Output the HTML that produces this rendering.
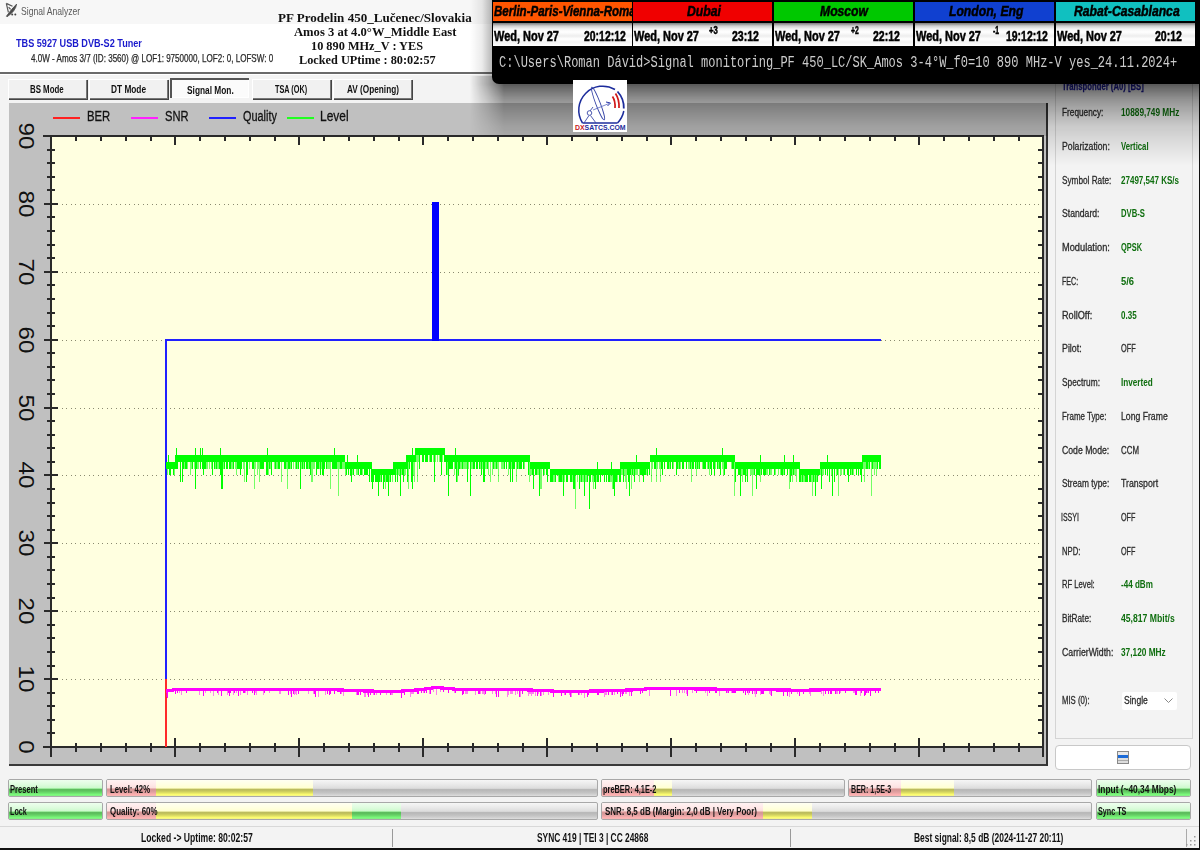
<!DOCTYPE html>
<html><head><meta charset="utf-8">
<style>
html,body{margin:0;padding:0;}
body{width:1200px;height:850px;overflow:hidden;position:relative;background:#f3f3f3;font-family:"Liberation Sans",sans-serif;}
.a{position:absolute;white-space:nowrap;}
.sx{transform-origin:0 0;}
.btn{position:absolute;top:79px;height:20px;background:#f1f1f1;box-sizing:border-box;border-top:1px solid #fff;border-left:1px solid #fff;box-shadow:inset -1px -1px 0 #777, 1px 1px 0 #444;}
.btn span{position:absolute;left:0;right:0;top:3px;text-align:center;font-size:11.5px;color:#111;}
.ylab{position:absolute;font-size:22px;color:#111;transform:translate(-50%,-50%) rotate(90deg) scaleX(1.1);line-height:1;}
.rl{position:absolute;white-space:nowrap;left:1062px;font-size:11px;color:#222;transform:scaleX(0.75);transform-origin:0 50%;}
.rv{position:absolute;white-space:nowrap;left:1121px;font-size:11px;color:#0a6a0a;font-weight:bold;transform:scaleX(0.75);transform-origin:0 50%;}
.rv.g{color:#333;font-weight:normal;}
.bar{position:absolute;height:18px;box-sizing:border-box;border:1px solid #a8a8a8;border-radius:2px;overflow:hidden;
 background:linear-gradient(#f6f6f6 0%,#e8e8e8 30%,#dcdcdc 52%,#b6b6b6 60%,#c4c4c4 80%,#d2d2d2 92%,#dedede 100%);}
.seg{position:absolute;top:0;bottom:0;}
.gr{background:linear-gradient(#eeffee 0%,#ddfcdd 30%,#ccfacc 50%,#a0eca0 53%,#58b858 60%,#66d066 75%,#7cfc7c 92%,#88e888 100%);}
.pk{background:linear-gradient(#fff2f2 0%,#ffe8e8 30%,#fbdede 50%,#ecb8b8 53%,#d49494 60%,#e0a0a0 75%,#ffb0b0 92%,#f4b8b8 100%);}
.yl{background:linear-gradient(#fffff2 0%,#ffffe0 30%,#ffffd0 50%,#e8e8a0 53%,#b8b858 60%,#d4d460 75%,#ffff70 92%,#f0f090 100%);}
.bt{position:absolute;white-space:nowrap;left:4px;top:2px;font-size:11px;color:#111;transform:scaleX(0.8);transform-origin:0 0;}
.clk{position:absolute;top:2px;height:19px;}
.clk span{position:absolute;left:-30px;right:-30px;top:1px;text-align:center;font-size:14.5px;transform:scaleX(0.82);white-space:nowrap;font-weight:bold;font-style:italic;color:#000;}
.dt{position:absolute;top:23px;height:23px;background:linear-gradient(#7a7a7a 0px,#cfcfcf 3px,#f4f4f4 6px,#ffffff 9px,#eeeeee 13px,#ffffff 16px,#f3f3f3 19px,#ffffff 23px);}
.dt .d{position:absolute;white-space:nowrap;left:1px;top:5px;font-size:14px;font-weight:bold;color:#000;transform:scaleX(0.8);transform-origin:0 0;}
.dt .t{position:absolute;white-space:nowrap;right:4px;top:5px;font-size:14px;font-weight:bold;color:#000;transform:scaleX(0.8);transform-origin:100% 0;}
.dt .s{position:absolute;top:0px;font-size:10px;font-weight:bold;color:#000;}
</style></head><body>
<!-- title bar & header -->
<div class="a" style="left:0;top:0;width:1200px;height:24px;background:#f7f7f7"></div>
<div class="a" style="left:0;top:24px;width:1200px;height:48px;background:#fff"></div>
<div class="a" style="left:0;top:72px;width:1200px;height:2px;background:#6a6a6a"></div>
<div class="a" style="left:0;top:74px;width:1200px;height:1px;background:#fff"></div>
<svg class="a" style="left:0px;top:0px" width="20" height="20" viewBox="0 0 20 20">
 <path d="M6.3 3.4 L12.5 6.3 M6.3 3.4 L8.4 12.4 M8.6 7.2 L10.6 9.4" stroke="#555" stroke-width="1.2" fill="none"/>
 <path d="M16.6 4.1 Q15.8 11 7 16.8 L6.4 16.2 Q11.5 9 16.6 4.1 Z" fill="#4a4a4a" stroke="#4a4a4a" stroke-width="0.8"/>
 <circle cx="12.2" cy="14.6" r="1" fill="#444"/><circle cx="15.3" cy="14.6" r="1" fill="#444"/>
</svg>



<!-- buttons -->
<div class="btn" style="left:8px;width:79px"></div>
<div class="btn" style="left:89px;width:79px"></div>
<div class="btn" style="left:170px;width:79px;top:78px;background:#fbfbfb;border:none;box-shadow:inset 2px 2px 0 #555, inset -1px -1px 0 #fff"></div>
<div class="btn" style="left:252px;width:79px"></div>
<div class="btn" style="left:333px;width:79px"></div>

<!-- chart panel -->
<div class="a" style="left:9px;top:103px;width:1037px;height:661px;background:#c0c0c0"></div>
<div class="a" style="left:9px;top:764px;width:1039px;height:2px;background:#3a3a3a"></div>
<div class="a" style="left:1046px;top:103px;width:2px;height:663px;background:#333"></div>
<svg width="1200" height="850" viewBox="0 0 1200 850" style="position:absolute;left:0;top:0" shape-rendering="crispEdges">
<rect x="51" y="136" width="992" height="611" fill="#ffffe0"/>
<line x1="57" y1="679.5" x2="1043" y2="679.5" stroke="#8a8a70" stroke-width="1" stroke-dasharray="1 3.5"/>
<line x1="57" y1="611.5" x2="1043" y2="611.5" stroke="#8a8a70" stroke-width="1" stroke-dasharray="1 3.5"/>
<line x1="57" y1="543.5" x2="1043" y2="543.5" stroke="#8a8a70" stroke-width="1" stroke-dasharray="1 3.5"/>
<line x1="57" y1="475.5" x2="1043" y2="475.5" stroke="#8a8a70" stroke-width="1" stroke-dasharray="1 3.5"/>
<line x1="57" y1="408.5" x2="1043" y2="408.5" stroke="#8a8a70" stroke-width="1" stroke-dasharray="1 3.5"/>
<line x1="57" y1="340.5" x2="1043" y2="340.5" stroke="#8a8a70" stroke-width="1" stroke-dasharray="1 3.5"/>
<line x1="57" y1="272.5" x2="1043" y2="272.5" stroke="#8a8a70" stroke-width="1" stroke-dasharray="1 3.5"/>
<line x1="57" y1="204.5" x2="1043" y2="204.5" stroke="#8a8a70" stroke-width="1" stroke-dasharray="1 3.5"/>
<rect x="50" y="135" width="2" height="613" fill="#2a2a2a"/>
<rect x="43" y="135" width="1000" height="2" fill="#2a2a2a"/>
<rect x="43" y="746" width="1000" height="2" fill="#2a2a2a"/>
<rect x="1042" y="135" width="2" height="613" fill="#2a2a2a"/>
<rect x="44" y="746" width="14" height="2" fill="#2a2a2a"/>
<rect x="47" y="732" width="8" height="2" fill="#2a2a2a"/>
<rect x="1038" y="732" width="5" height="2" fill="#2a2a2a"/>
<rect x="47" y="719" width="8" height="2" fill="#2a2a2a"/>
<rect x="1038" y="719" width="5" height="2" fill="#2a2a2a"/>
<rect x="47" y="705" width="8" height="2" fill="#2a2a2a"/>
<rect x="1038" y="705" width="5" height="2" fill="#2a2a2a"/>
<rect x="47" y="692" width="8" height="2" fill="#2a2a2a"/>
<rect x="1038" y="692" width="5" height="2" fill="#2a2a2a"/>
<rect x="44" y="678" width="14" height="2" fill="#2a2a2a"/>
<rect x="47" y="665" width="8" height="2" fill="#2a2a2a"/>
<rect x="1038" y="665" width="5" height="2" fill="#2a2a2a"/>
<rect x="47" y="651" width="8" height="2" fill="#2a2a2a"/>
<rect x="1038" y="651" width="5" height="2" fill="#2a2a2a"/>
<rect x="47" y="637" width="8" height="2" fill="#2a2a2a"/>
<rect x="1038" y="637" width="5" height="2" fill="#2a2a2a"/>
<rect x="47" y="624" width="8" height="2" fill="#2a2a2a"/>
<rect x="1038" y="624" width="5" height="2" fill="#2a2a2a"/>
<rect x="44" y="610" width="14" height="2" fill="#2a2a2a"/>
<rect x="47" y="597" width="8" height="2" fill="#2a2a2a"/>
<rect x="1038" y="597" width="5" height="2" fill="#2a2a2a"/>
<rect x="47" y="583" width="8" height="2" fill="#2a2a2a"/>
<rect x="1038" y="583" width="5" height="2" fill="#2a2a2a"/>
<rect x="47" y="569" width="8" height="2" fill="#2a2a2a"/>
<rect x="1038" y="569" width="5" height="2" fill="#2a2a2a"/>
<rect x="47" y="556" width="8" height="2" fill="#2a2a2a"/>
<rect x="1038" y="556" width="5" height="2" fill="#2a2a2a"/>
<rect x="44" y="542" width="14" height="2" fill="#2a2a2a"/>
<rect x="47" y="529" width="8" height="2" fill="#2a2a2a"/>
<rect x="1038" y="529" width="5" height="2" fill="#2a2a2a"/>
<rect x="47" y="515" width="8" height="2" fill="#2a2a2a"/>
<rect x="1038" y="515" width="5" height="2" fill="#2a2a2a"/>
<rect x="47" y="502" width="8" height="2" fill="#2a2a2a"/>
<rect x="1038" y="502" width="5" height="2" fill="#2a2a2a"/>
<rect x="47" y="488" width="8" height="2" fill="#2a2a2a"/>
<rect x="1038" y="488" width="5" height="2" fill="#2a2a2a"/>
<rect x="44" y="474" width="14" height="2" fill="#2a2a2a"/>
<rect x="47" y="461" width="8" height="2" fill="#2a2a2a"/>
<rect x="1038" y="461" width="5" height="2" fill="#2a2a2a"/>
<rect x="47" y="447" width="8" height="2" fill="#2a2a2a"/>
<rect x="1038" y="447" width="5" height="2" fill="#2a2a2a"/>
<rect x="47" y="434" width="8" height="2" fill="#2a2a2a"/>
<rect x="1038" y="434" width="5" height="2" fill="#2a2a2a"/>
<rect x="47" y="420" width="8" height="2" fill="#2a2a2a"/>
<rect x="1038" y="420" width="5" height="2" fill="#2a2a2a"/>
<rect x="44" y="407" width="14" height="2" fill="#2a2a2a"/>
<rect x="47" y="393" width="8" height="2" fill="#2a2a2a"/>
<rect x="1038" y="393" width="5" height="2" fill="#2a2a2a"/>
<rect x="47" y="379" width="8" height="2" fill="#2a2a2a"/>
<rect x="1038" y="379" width="5" height="2" fill="#2a2a2a"/>
<rect x="47" y="366" width="8" height="2" fill="#2a2a2a"/>
<rect x="1038" y="366" width="5" height="2" fill="#2a2a2a"/>
<rect x="47" y="352" width="8" height="2" fill="#2a2a2a"/>
<rect x="1038" y="352" width="5" height="2" fill="#2a2a2a"/>
<rect x="44" y="339" width="14" height="2" fill="#2a2a2a"/>
<rect x="47" y="325" width="8" height="2" fill="#2a2a2a"/>
<rect x="1038" y="325" width="5" height="2" fill="#2a2a2a"/>
<rect x="47" y="312" width="8" height="2" fill="#2a2a2a"/>
<rect x="1038" y="312" width="5" height="2" fill="#2a2a2a"/>
<rect x="47" y="298" width="8" height="2" fill="#2a2a2a"/>
<rect x="1038" y="298" width="5" height="2" fill="#2a2a2a"/>
<rect x="47" y="284" width="8" height="2" fill="#2a2a2a"/>
<rect x="1038" y="284" width="5" height="2" fill="#2a2a2a"/>
<rect x="44" y="271" width="14" height="2" fill="#2a2a2a"/>
<rect x="47" y="257" width="8" height="2" fill="#2a2a2a"/>
<rect x="1038" y="257" width="5" height="2" fill="#2a2a2a"/>
<rect x="47" y="244" width="8" height="2" fill="#2a2a2a"/>
<rect x="1038" y="244" width="5" height="2" fill="#2a2a2a"/>
<rect x="47" y="230" width="8" height="2" fill="#2a2a2a"/>
<rect x="1038" y="230" width="5" height="2" fill="#2a2a2a"/>
<rect x="47" y="216" width="8" height="2" fill="#2a2a2a"/>
<rect x="1038" y="216" width="5" height="2" fill="#2a2a2a"/>
<rect x="44" y="203" width="14" height="2" fill="#2a2a2a"/>
<rect x="47" y="189" width="8" height="2" fill="#2a2a2a"/>
<rect x="1038" y="189" width="5" height="2" fill="#2a2a2a"/>
<rect x="47" y="176" width="8" height="2" fill="#2a2a2a"/>
<rect x="1038" y="176" width="5" height="2" fill="#2a2a2a"/>
<rect x="47" y="162" width="8" height="2" fill="#2a2a2a"/>
<rect x="1038" y="162" width="5" height="2" fill="#2a2a2a"/>
<rect x="47" y="149" width="8" height="2" fill="#2a2a2a"/>
<rect x="1038" y="149" width="5" height="2" fill="#2a2a2a"/>
<rect x="44" y="135" width="14" height="2" fill="#2a2a2a"/>
<rect x="75" y="136" width="2" height="5" fill="#2a2a2a"/>
<rect x="75" y="743" width="2" height="9" fill="#2a2a2a"/>
<rect x="100" y="136" width="2" height="5" fill="#2a2a2a"/>
<rect x="100" y="743" width="2" height="9" fill="#2a2a2a"/>
<rect x="125" y="136" width="2" height="5" fill="#2a2a2a"/>
<rect x="125" y="743" width="2" height="9" fill="#2a2a2a"/>
<rect x="150" y="136" width="2" height="5" fill="#2a2a2a"/>
<rect x="150" y="743" width="2" height="9" fill="#2a2a2a"/>
<rect x="174" y="136" width="2" height="9" fill="#2a2a2a"/>
<rect x="174" y="738" width="2" height="19" fill="#2a2a2a"/>
<rect x="199" y="136" width="2" height="5" fill="#2a2a2a"/>
<rect x="199" y="743" width="2" height="9" fill="#2a2a2a"/>
<rect x="224" y="136" width="2" height="5" fill="#2a2a2a"/>
<rect x="224" y="743" width="2" height="9" fill="#2a2a2a"/>
<rect x="249" y="136" width="2" height="5" fill="#2a2a2a"/>
<rect x="249" y="743" width="2" height="9" fill="#2a2a2a"/>
<rect x="274" y="136" width="2" height="5" fill="#2a2a2a"/>
<rect x="274" y="743" width="2" height="9" fill="#2a2a2a"/>
<rect x="298" y="136" width="2" height="9" fill="#2a2a2a"/>
<rect x="298" y="738" width="2" height="19" fill="#2a2a2a"/>
<rect x="323" y="136" width="2" height="5" fill="#2a2a2a"/>
<rect x="323" y="743" width="2" height="9" fill="#2a2a2a"/>
<rect x="348" y="136" width="2" height="5" fill="#2a2a2a"/>
<rect x="348" y="743" width="2" height="9" fill="#2a2a2a"/>
<rect x="373" y="136" width="2" height="5" fill="#2a2a2a"/>
<rect x="373" y="743" width="2" height="9" fill="#2a2a2a"/>
<rect x="398" y="136" width="2" height="5" fill="#2a2a2a"/>
<rect x="398" y="743" width="2" height="9" fill="#2a2a2a"/>
<rect x="422" y="136" width="2" height="9" fill="#2a2a2a"/>
<rect x="422" y="738" width="2" height="19" fill="#2a2a2a"/>
<rect x="447" y="136" width="2" height="5" fill="#2a2a2a"/>
<rect x="447" y="743" width="2" height="9" fill="#2a2a2a"/>
<rect x="472" y="136" width="2" height="5" fill="#2a2a2a"/>
<rect x="472" y="743" width="2" height="9" fill="#2a2a2a"/>
<rect x="497" y="136" width="2" height="5" fill="#2a2a2a"/>
<rect x="497" y="743" width="2" height="9" fill="#2a2a2a"/>
<rect x="522" y="136" width="2" height="5" fill="#2a2a2a"/>
<rect x="522" y="743" width="2" height="9" fill="#2a2a2a"/>
<rect x="546" y="136" width="2" height="9" fill="#2a2a2a"/>
<rect x="546" y="738" width="2" height="19" fill="#2a2a2a"/>
<rect x="571" y="136" width="2" height="5" fill="#2a2a2a"/>
<rect x="571" y="743" width="2" height="9" fill="#2a2a2a"/>
<rect x="596" y="136" width="2" height="5" fill="#2a2a2a"/>
<rect x="596" y="743" width="2" height="9" fill="#2a2a2a"/>
<rect x="621" y="136" width="2" height="5" fill="#2a2a2a"/>
<rect x="621" y="743" width="2" height="9" fill="#2a2a2a"/>
<rect x="646" y="136" width="2" height="5" fill="#2a2a2a"/>
<rect x="646" y="743" width="2" height="9" fill="#2a2a2a"/>
<rect x="670" y="136" width="2" height="9" fill="#2a2a2a"/>
<rect x="670" y="738" width="2" height="19" fill="#2a2a2a"/>
<rect x="695" y="136" width="2" height="5" fill="#2a2a2a"/>
<rect x="695" y="743" width="2" height="9" fill="#2a2a2a"/>
<rect x="720" y="136" width="2" height="5" fill="#2a2a2a"/>
<rect x="720" y="743" width="2" height="9" fill="#2a2a2a"/>
<rect x="745" y="136" width="2" height="5" fill="#2a2a2a"/>
<rect x="745" y="743" width="2" height="9" fill="#2a2a2a"/>
<rect x="770" y="136" width="2" height="5" fill="#2a2a2a"/>
<rect x="770" y="743" width="2" height="9" fill="#2a2a2a"/>
<rect x="794" y="136" width="2" height="9" fill="#2a2a2a"/>
<rect x="794" y="738" width="2" height="19" fill="#2a2a2a"/>
<rect x="819" y="136" width="2" height="5" fill="#2a2a2a"/>
<rect x="819" y="743" width="2" height="9" fill="#2a2a2a"/>
<rect x="844" y="136" width="2" height="5" fill="#2a2a2a"/>
<rect x="844" y="743" width="2" height="9" fill="#2a2a2a"/>
<rect x="869" y="136" width="2" height="5" fill="#2a2a2a"/>
<rect x="869" y="743" width="2" height="9" fill="#2a2a2a"/>
<rect x="894" y="136" width="2" height="5" fill="#2a2a2a"/>
<rect x="894" y="743" width="2" height="9" fill="#2a2a2a"/>
<rect x="918" y="136" width="2" height="9" fill="#2a2a2a"/>
<rect x="918" y="738" width="2" height="19" fill="#2a2a2a"/>
<rect x="943" y="136" width="2" height="5" fill="#2a2a2a"/>
<rect x="943" y="743" width="2" height="9" fill="#2a2a2a"/>
<rect x="968" y="136" width="2" height="5" fill="#2a2a2a"/>
<rect x="968" y="743" width="2" height="9" fill="#2a2a2a"/>
<rect x="993" y="136" width="2" height="5" fill="#2a2a2a"/>
<rect x="993" y="743" width="2" height="9" fill="#2a2a2a"/>
<rect x="1018" y="136" width="2" height="5" fill="#2a2a2a"/>
<rect x="1018" y="743" width="2" height="9" fill="#2a2a2a"/>
<rect x="50" y="747" width="2" height="10" fill="#2a2a2a"/>
<rect x="1042" y="747" width="2" height="10" fill="#2a2a2a"/>
<rect x="165" y="679.1111111111111" width="2" height="67.88888888888891" fill="#ff2a2a"/>
<rect x="165" y="339" width="2" height="340.1111111111111" fill="#2020ff"/>
<rect x="165" y="339" width="716" height="2" fill="#2020ff"/>
<rect x="432" y="202" width="7" height="139" fill="#0000ff"/>
<path d="M166.5,461.9V468.7M167.5,461.9V468.7M168.5,455.1V468.7M169.5,461.9V468.7M170.5,461.9V468.7M171.5,461.9V468.7M172.5,461.9V468.7M173.5,461.9V468.7M174.5,461.9V468.7M175.5,455.1V461.9M176.5,448.3V461.9M177.5,455.1V461.9M178.5,455.1V461.9M179.5,455.1V461.9M180.5,455.1V461.9M181.5,455.1V461.9M182.5,455.1V461.9M183.5,455.1V461.9M184.5,455.1V461.9M185.5,455.1V461.9M186.5,455.1V461.9M187.5,455.1V461.9M188.5,455.1V461.9M189.5,455.1V461.9M190.5,455.1V461.9M191.5,455.1V461.9M192.5,455.1V461.9M193.5,455.1V461.9M194.5,455.1V461.9M195.5,448.3V461.9M196.5,455.1V461.9M197.5,455.1V461.9M198.5,455.1V461.9M199.5,455.1V461.9M200.5,448.3V461.9M201.5,455.1V461.9M202.5,448.3V461.9M203.5,455.1V461.9M204.5,455.1V461.9M205.5,455.1V461.9M206.5,455.1V461.9M207.5,455.1V461.9M208.5,455.1V461.9M209.5,455.1V461.9M210.5,455.1V461.9M211.5,455.1V461.9M212.5,455.1V461.9M213.5,455.1V461.9M214.5,455.1V461.9M215.5,455.1V461.9M216.5,455.1V461.9M217.5,455.1V461.9M218.5,455.1V461.9M219.5,455.1V461.9M220.5,448.3V461.9M221.5,455.1V461.9M222.5,455.1V461.9M223.5,455.1V461.9M224.5,455.1V461.9M225.5,455.1V461.9M226.5,455.1V461.9M227.5,455.1V461.9M228.5,455.1V461.9M229.5,455.1V461.9M230.5,455.1V461.9M231.5,455.1V461.9M232.5,455.1V461.9M233.5,455.1V461.9M234.5,455.1V461.9M235.5,455.1V461.9M236.5,455.1V461.9M237.5,455.1V461.9M238.5,455.1V461.9M239.5,455.1V461.9M240.5,455.1V461.9M241.5,455.1V461.9M242.5,455.1V461.9M243.5,455.1V461.9M244.5,455.1V461.9M245.5,455.1V461.9M246.5,455.1V461.9M247.5,455.1V461.9M248.5,455.1V461.9M249.5,455.1V461.9M250.5,455.1V461.9M251.5,455.1V461.9M252.5,455.1V461.9M253.5,455.1V461.9M254.5,455.1V461.9M255.5,455.1V461.9M256.5,455.1V461.9M257.5,455.1V461.9M258.5,455.1V461.9M259.5,455.1V461.9M260.5,455.1V461.9M261.5,455.1V461.9M262.5,455.1V461.9M263.5,455.1V461.9M264.5,455.1V461.9M265.5,455.1V461.9M266.5,455.1V461.9M267.5,448.3V461.9M268.5,455.1V461.9M269.5,455.1V461.9M270.5,455.1V461.9M271.5,455.1V461.9M272.5,455.1V461.9M273.5,455.1V461.9M274.5,455.1V461.9M275.5,455.1V461.9M276.5,455.1V461.9M277.5,455.1V461.9M278.5,455.1V461.9M279.5,455.1V461.9M280.5,455.1V461.9M281.5,455.1V461.9M282.5,455.1V461.9M283.5,455.1V461.9M284.5,455.1V461.9M285.5,455.1V461.9M286.5,455.1V461.9M287.5,455.1V461.9M288.5,455.1V461.9M289.5,455.1V461.9M290.5,455.1V461.9M291.5,455.1V461.9M292.5,455.1V461.9M293.5,455.1V461.9M294.5,455.1V461.9M295.5,455.1V461.9M296.5,455.1V461.9M297.5,455.1V461.9M298.5,455.1V461.9M299.5,455.1V461.9M300.5,455.1V461.9M301.5,455.1V461.9M302.5,455.1V461.9M303.5,455.1V461.9M304.5,455.1V461.9M305.5,455.1V461.9M306.5,455.1V461.9M307.5,455.1V461.9M308.5,455.1V461.9M309.5,455.1V461.9M310.5,455.1V461.9M311.5,455.1V461.9M312.5,455.1V461.9M313.5,455.1V461.9M314.5,455.1V461.9M315.5,455.1V461.9M316.5,455.1V461.9M317.5,455.1V461.9M318.5,455.1V461.9M319.5,455.1V461.9M320.5,455.1V461.9M321.5,455.1V461.9M322.5,455.1V461.9M323.5,455.1V461.9M324.5,455.1V461.9M325.5,455.1V461.9M326.5,455.1V461.9M327.5,455.1V461.9M328.5,455.1V461.9M329.5,455.1V461.9M330.5,455.1V461.9M331.5,455.1V461.9M332.5,455.1V461.9M333.5,455.1V461.9M334.5,448.3V461.9M335.5,455.1V461.9M336.5,455.1V461.9M337.5,455.1V461.9M338.5,455.1V461.9M339.5,455.1V461.9M340.5,455.1V461.9M341.5,455.1V461.9M342.5,455.1V461.9M343.5,455.1V461.9M344.5,455.1V461.9M345.5,461.9V468.7M346.5,461.9V468.7M347.5,455.1V468.7M348.5,461.9V468.7M349.5,461.9V468.7M350.5,461.9V468.7M351.5,461.9V468.7M352.5,461.9V468.7M353.5,461.9V468.7M354.5,461.9V468.7M355.5,461.9V468.7M356.5,461.9V468.7M357.5,455.1V468.7M358.5,461.9V468.7M359.5,461.9V468.7M360.5,461.9V468.7M361.5,461.9V468.7M362.5,461.9V468.7M363.5,461.9V468.7M364.5,461.9V468.7M365.5,461.9V468.7M366.5,461.9V468.7M367.5,461.9V468.7M368.5,461.9V468.7M369.5,461.9V468.7M370.5,461.9V468.7M371.5,461.9V468.7M372.5,468.7V475.4M373.5,468.7V475.4M374.5,468.7V475.4M375.5,468.7V475.4M376.5,468.7V475.4M377.5,468.7V475.4M378.5,468.7V475.4M379.5,468.7V475.4M380.5,468.7V475.4M381.5,468.7V475.4M382.5,468.7V475.4M383.5,468.7V475.4M384.5,468.7V475.4M385.5,468.7V475.4M386.5,468.7V475.4M387.5,468.7V475.4M388.5,468.7V475.4M389.5,468.7V475.4M390.5,468.7V475.4M391.5,468.7V475.4M392.5,468.7V475.4M393.5,461.9V468.7M394.5,461.9V468.7M395.5,461.9V468.7M396.5,461.9V468.7M397.5,461.9V468.7M398.5,461.9V468.7M399.5,461.9V468.7M400.5,461.9V468.7M401.5,461.9V468.7M402.5,461.9V468.7M403.5,461.9V468.7M404.5,461.9V468.7M405.5,461.9V468.7M406.5,455.1V461.9M407.5,455.1V461.9M408.5,455.1V461.9M409.5,455.1V461.9M410.5,455.1V461.9M411.5,455.1V461.9M412.5,448.3V461.9M413.5,455.1V461.9M414.5,455.1V461.9M415.5,448.3V455.1M416.5,448.3V455.1M417.5,448.3V455.1M418.5,448.3V455.1M419.5,448.3V455.1M420.5,448.3V455.1M421.5,448.3V455.1M422.5,448.3V455.1M423.5,448.3V455.1M424.5,448.3V455.1M425.5,448.3V455.1M426.5,448.3V455.1M427.5,448.3V455.1M428.5,448.3V455.1M429.5,448.3V455.1M430.5,448.3V455.1M431.5,448.3V455.1M432.5,448.3V455.1M433.5,448.3V455.1M434.5,448.3V455.1M435.5,448.3V455.1M436.5,448.3V455.1M437.5,448.3V455.1M438.5,448.3V455.1M439.5,448.3V455.1M440.5,448.3V455.1M441.5,448.3V455.1M442.5,448.3V455.1M443.5,448.3V455.1M444.5,448.3V455.1M445.5,455.1V461.9M446.5,455.1V461.9M447.5,455.1V461.9M448.5,455.1V461.9M449.5,455.1V461.9M450.5,455.1V461.9M451.5,455.1V461.9M452.5,455.1V461.9M453.5,455.1V461.9M454.5,455.1V461.9M455.5,448.3V461.9M456.5,455.1V461.9M457.5,455.1V461.9M458.5,455.1V461.9M459.5,455.1V461.9M460.5,455.1V461.9M461.5,455.1V461.9M462.5,455.1V461.9M463.5,455.1V461.9M464.5,455.1V461.9M465.5,455.1V461.9M466.5,455.1V461.9M467.5,455.1V461.9M468.5,455.1V461.9M469.5,455.1V461.9M470.5,455.1V461.9M471.5,455.1V461.9M472.5,455.1V461.9M473.5,455.1V461.9M474.5,455.1V461.9M475.5,455.1V461.9M476.5,455.1V461.9M477.5,455.1V461.9M478.5,455.1V461.9M479.5,455.1V461.9M480.5,455.1V461.9M481.5,455.1V461.9M482.5,455.1V461.9M483.5,455.1V461.9M484.5,455.1V461.9M485.5,455.1V461.9M486.5,455.1V461.9M487.5,455.1V461.9M488.5,455.1V461.9M489.5,455.1V461.9M490.5,455.1V461.9M491.5,455.1V461.9M492.5,455.1V461.9M493.5,455.1V461.9M494.5,455.1V461.9M495.5,455.1V461.9M496.5,455.1V461.9M497.5,455.1V461.9M498.5,455.1V461.9M499.5,455.1V461.9M500.5,455.1V461.9M501.5,455.1V461.9M502.5,455.1V461.9M503.5,455.1V461.9M504.5,455.1V461.9M505.5,455.1V461.9M506.5,455.1V461.9M507.5,455.1V461.9M508.5,455.1V461.9M509.5,455.1V461.9M510.5,455.1V461.9M511.5,455.1V461.9M512.5,455.1V461.9M513.5,455.1V461.9M514.5,455.1V461.9M515.5,455.1V461.9M516.5,455.1V461.9M517.5,455.1V461.9M518.5,455.1V461.9M519.5,455.1V461.9M520.5,455.1V461.9M521.5,455.1V461.9M522.5,455.1V461.9M523.5,455.1V461.9M524.5,455.1V461.9M525.5,455.1V461.9M526.5,455.1V461.9M527.5,455.1V461.9M528.5,455.1V461.9M529.5,455.1V461.9M530.5,461.9V468.7M531.5,461.9V468.7M532.5,461.9V468.7M533.5,461.9V468.7M534.5,461.9V468.7M535.5,461.9V468.7M536.5,461.9V468.7M537.5,461.9V468.7M538.5,461.9V468.7M539.5,461.9V468.7M540.5,461.9V468.7M541.5,461.9V468.7M542.5,461.9V468.7M543.5,461.9V468.7M544.5,461.9V468.7M545.5,461.9V468.7M546.5,461.9V468.7M547.5,461.9V468.7M548.5,461.9V468.7M549.5,461.9V468.7M550.5,468.7V475.4M551.5,468.7V475.4M552.5,468.7V475.4M553.5,468.7V475.4M554.5,468.7V475.4M555.5,468.7V475.4M556.5,468.7V475.4M557.5,468.7V475.4M558.5,468.7V475.4M559.5,468.7V475.4M560.5,468.7V475.4M561.5,468.7V475.4M562.5,468.7V475.4M563.5,468.7V475.4M564.5,468.7V475.4M565.5,468.7V475.4M566.5,468.7V475.4M567.5,468.7V475.4M568.5,468.7V475.4M569.5,468.7V475.4M570.5,468.7V475.4M571.5,468.7V475.4M572.5,468.7V475.4M573.5,468.7V475.4M574.5,468.7V475.4M575.5,468.7V475.4M576.5,468.7V475.4M577.5,468.7V475.4M578.5,468.7V475.4M579.5,468.7V475.4M580.5,468.7V475.4M581.5,468.7V475.4M582.5,468.7V475.4M583.5,468.7V475.4M584.5,468.7V475.4M585.5,468.7V475.4M586.5,468.7V475.4M587.5,468.7V475.4M588.5,468.7V475.4M589.5,468.7V475.4M590.5,468.7V475.4M591.5,468.7V475.4M592.5,468.7V475.4M593.5,468.7V475.4M594.5,468.7V475.4M595.5,468.7V475.4M596.5,468.7V475.4M597.5,461.9V475.4M598.5,468.7V475.4M599.5,468.7V475.4M600.5,468.7V475.4M601.5,468.7V475.4M602.5,468.7V475.4M603.5,468.7V475.4M604.5,468.7V475.4M605.5,468.7V475.4M606.5,468.7V475.4M607.5,468.7V475.4M608.5,468.7V475.4M609.5,468.7V475.4M610.5,468.7V475.4M611.5,461.9V475.4M612.5,468.7V475.4M613.5,468.7V475.4M614.5,468.7V475.4M615.5,468.7V475.4M616.5,468.7V475.4M617.5,468.7V475.4M618.5,468.7V475.4M619.5,468.7V475.4M620.5,461.9V468.7M621.5,461.9V468.7M622.5,461.9V468.7M623.5,461.9V468.7M624.5,461.9V468.7M625.5,461.9V468.7M626.5,461.9V468.7M627.5,461.9V468.7M628.5,461.9V468.7M629.5,461.9V468.7M630.5,461.9V468.7M631.5,461.9V468.7M632.5,461.9V468.7M633.5,461.9V468.7M634.5,461.9V468.7M635.5,461.9V468.7M636.5,455.1V468.7M637.5,461.9V468.7M638.5,461.9V468.7M639.5,461.9V468.7M640.5,461.9V468.7M641.5,461.9V468.7M642.5,461.9V468.7M643.5,461.9V468.7M644.5,461.9V468.7M645.5,461.9V468.7M646.5,461.9V468.7M647.5,461.9V468.7M648.5,461.9V468.7M649.5,461.9V468.7M650.5,455.1V461.9M651.5,455.1V461.9M652.5,455.1V461.9M653.5,455.1V461.9M654.5,455.1V461.9M655.5,455.1V461.9M656.5,448.3V461.9M657.5,455.1V461.9M658.5,455.1V461.9M659.5,455.1V461.9M660.5,455.1V461.9M661.5,455.1V461.9M662.5,455.1V461.9M663.5,455.1V461.9M664.5,455.1V461.9M665.5,455.1V461.9M666.5,455.1V461.9M667.5,455.1V461.9M668.5,455.1V461.9M669.5,455.1V461.9M670.5,455.1V461.9M671.5,455.1V461.9M672.5,455.1V461.9M673.5,455.1V461.9M674.5,455.1V461.9M675.5,455.1V461.9M676.5,455.1V461.9M677.5,455.1V461.9M678.5,455.1V461.9M679.5,455.1V461.9M680.5,455.1V461.9M681.5,455.1V461.9M682.5,455.1V461.9M683.5,455.1V461.9M684.5,455.1V461.9M685.5,455.1V461.9M686.5,455.1V461.9M687.5,455.1V461.9M688.5,455.1V461.9M689.5,455.1V461.9M690.5,455.1V461.9M691.5,455.1V461.9M692.5,455.1V461.9M693.5,455.1V461.9M694.5,455.1V461.9M695.5,455.1V461.9M696.5,455.1V461.9M697.5,455.1V461.9M698.5,455.1V461.9M699.5,455.1V461.9M700.5,455.1V461.9M701.5,455.1V461.9M702.5,455.1V461.9M703.5,455.1V461.9M704.5,455.1V461.9M705.5,455.1V461.9M706.5,455.1V461.9M707.5,455.1V461.9M708.5,455.1V461.9M709.5,455.1V461.9M710.5,455.1V461.9M711.5,455.1V461.9M712.5,455.1V461.9M713.5,455.1V461.9M714.5,455.1V461.9M715.5,455.1V461.9M716.5,455.1V461.9M717.5,455.1V461.9M718.5,455.1V461.9M719.5,455.1V461.9M720.5,455.1V461.9M721.5,455.1V461.9M722.5,448.3V461.9M723.5,455.1V461.9M724.5,455.1V461.9M725.5,455.1V461.9M726.5,455.1V461.9M727.5,455.1V461.9M728.5,455.1V461.9M729.5,455.1V461.9M730.5,455.1V461.9M731.5,455.1V461.9M732.5,455.1V461.9M733.5,455.1V461.9M734.5,455.1V461.9M735.5,461.9V468.7M736.5,461.9V468.7M737.5,461.9V468.7M738.5,461.9V468.7M739.5,461.9V468.7M740.5,461.9V468.7M741.5,461.9V468.7M742.5,461.9V468.7M743.5,461.9V468.7M744.5,461.9V468.7M745.5,461.9V468.7M746.5,461.9V468.7M747.5,461.9V468.7M748.5,461.9V468.7M749.5,461.9V468.7M750.5,461.9V468.7M751.5,461.9V468.7M752.5,461.9V468.7M753.5,461.9V468.7M754.5,461.9V468.7M755.5,461.9V468.7M756.5,461.9V468.7M757.5,461.9V468.7M758.5,461.9V468.7M759.5,461.9V468.7M760.5,455.1V468.7M761.5,461.9V468.7M762.5,461.9V468.7M763.5,461.9V468.7M764.5,461.9V468.7M765.5,461.9V468.7M766.5,461.9V468.7M767.5,461.9V468.7M768.5,461.9V468.7M769.5,461.9V468.7M770.5,461.9V468.7M771.5,461.9V468.7M772.5,461.9V468.7M773.5,461.9V468.7M774.5,461.9V468.7M775.5,461.9V468.7M776.5,461.9V468.7M777.5,461.9V468.7M778.5,461.9V468.7M779.5,461.9V468.7M780.5,461.9V468.7M781.5,461.9V468.7M782.5,461.9V468.7M783.5,461.9V468.7M784.5,455.1V468.7M785.5,461.9V468.7M786.5,461.9V468.7M787.5,461.9V468.7M788.5,461.9V468.7M789.5,461.9V468.7M790.5,461.9V468.7M791.5,461.9V468.7M792.5,461.9V468.7M793.5,455.1V468.7M794.5,461.9V468.7M795.5,461.9V468.7M796.5,461.9V468.7M797.5,461.9V468.7M798.5,461.9V468.7M799.5,461.9V468.7M800.5,468.7V475.4M801.5,468.7V475.4M802.5,468.7V475.4M803.5,468.7V475.4M804.5,468.7V475.4M805.5,468.7V475.4M806.5,468.7V475.4M807.5,468.7V475.4M808.5,468.7V475.4M809.5,468.7V475.4M810.5,468.7V475.4M811.5,468.7V475.4M812.5,468.7V475.4M813.5,468.7V475.4M814.5,468.7V475.4M815.5,468.7V475.4M816.5,468.7V475.4M817.5,468.7V475.4M818.5,468.7V475.4M819.5,468.7V475.4M820.5,461.9V468.7M821.5,461.9V468.7M822.5,461.9V468.7M823.5,461.9V468.7M824.5,461.9V468.7M825.5,461.9V468.7M826.5,461.9V468.7M827.5,455.1V468.7M828.5,461.9V468.7M829.5,461.9V468.7M830.5,461.9V468.7M831.5,461.9V468.7M832.5,461.9V468.7M833.5,461.9V468.7M834.5,461.9V468.7M835.5,461.9V468.7M836.5,461.9V468.7M837.5,461.9V468.7M838.5,461.9V468.7M839.5,461.9V468.7M840.5,461.9V468.7M841.5,461.9V468.7M842.5,461.9V468.7M843.5,461.9V468.7M844.5,461.9V468.7M845.5,461.9V468.7M846.5,461.9V468.7M847.5,461.9V468.7M848.5,461.9V468.7M849.5,461.9V468.7M850.5,461.9V468.7M851.5,461.9V468.7M852.5,461.9V468.7M853.5,461.9V468.7M854.5,461.9V468.7M855.5,461.9V468.7M856.5,461.9V468.7M857.5,461.9V468.7M858.5,461.9V468.7M859.5,461.9V468.7M860.5,461.9V468.7M861.5,461.9V468.7M862.5,455.1V461.9M863.5,455.1V461.9M864.5,455.1V461.9M865.5,455.1V461.9M866.5,455.1V461.9M867.5,455.1V461.9M868.5,455.1V461.9M869.5,455.1V461.9M870.5,455.1V461.9M871.5,455.1V461.9M872.5,455.1V461.9M873.5,455.1V461.9M874.5,455.1V461.9M875.5,455.1V461.9M876.5,455.1V461.9M877.5,455.1V461.9M878.5,455.1V461.9M879.5,455.1V461.9M880.5,455.1V461.9" stroke="#00ff00" stroke-width="1" fill="none"/>
<path d="M169.5,468.7V475.4M170.5,468.7V475.4M173.5,468.7V475.4M175.5,461.9V468.7M176.5,461.9V468.7M177.5,461.9V468.7M180.5,461.9V482.2M182.5,461.9V482.2M183.5,461.9V468.7M185.5,461.9V468.7M186.5,461.9V468.7M192.5,461.9V468.7M195.5,461.9V489.0M196.5,461.9V468.7M200.5,461.9V468.7M202.5,461.9V468.7M203.5,461.9V475.4M204.5,461.9V468.7M205.5,461.9V468.7M212.5,461.9V475.4M214.5,461.9V468.7M216.5,461.9V468.7M219.5,461.9V468.7M220.5,461.9V475.4M221.5,461.9V489.0M222.5,461.9V489.0M224.5,461.9V468.7M226.5,461.9V468.7M227.5,461.9V468.7M229.5,461.9V468.7M230.5,461.9V468.7M233.5,461.9V468.7M237.5,461.9V468.7M238.5,461.9V468.7M239.5,461.9V468.7M240.5,461.9V475.4M241.5,461.9V468.7M246.5,461.9V482.2M247.5,461.9V475.4M252.5,461.9V468.7M253.5,461.9V468.7M260.5,461.9V468.7M261.5,461.9V468.7M262.5,461.9V468.7M263.5,461.9V468.7M266.5,461.9V475.4M267.5,461.9V475.4M269.5,461.9V468.7M271.5,461.9V475.4M275.5,461.9V468.7M278.5,461.9V468.7M279.5,461.9V468.7M284.5,461.9V468.7M285.5,461.9V468.7M288.5,461.9V468.7M289.5,461.9V468.7M291.5,461.9V468.7M296.5,461.9V468.7M298.5,461.9V468.7M300.5,461.9V489.0M302.5,461.9V468.7M304.5,461.9V468.7M306.5,461.9V468.7M307.5,461.9V468.7M309.5,461.9V468.7M310.5,461.9V475.4M316.5,461.9V475.4M317.5,461.9V468.7M318.5,461.9V468.7M320.5,461.9V475.4M322.5,461.9V475.4M323.5,461.9V475.4M324.5,461.9V468.7M326.5,461.9V468.7M332.5,461.9V468.7M333.5,461.9V468.7M334.5,461.9V468.7M335.5,461.9V468.7M336.5,461.9V468.7M340.5,461.9V468.7M341.5,461.9V468.7M346.5,468.7V475.4M348.5,468.7V475.4M350.5,468.7V475.4M351.5,468.7V482.2M353.5,468.7V475.4M358.5,468.7V475.4M360.5,468.7V475.4M361.5,468.7V475.4M364.5,468.7V475.4M365.5,468.7V475.4M366.5,468.7V475.4M367.5,468.7V475.4M369.5,468.7V482.2M371.5,468.7V482.2M372.5,475.4V489.0M373.5,475.4V482.2M375.5,475.4V482.2M376.5,475.4V482.2M377.5,475.4V482.2M378.5,475.4V495.8M379.5,475.4V482.2M381.5,475.4V482.2M383.5,475.4V489.0M384.5,475.4V482.2M386.5,475.4V482.2M387.5,475.4V482.2M388.5,475.4V495.8M390.5,475.4V482.2M393.5,468.7V475.4M394.5,468.7V475.4M395.5,468.7V482.2M397.5,468.7V482.2M400.5,468.7V495.8M402.5,468.7V475.4M403.5,468.7V482.2M406.5,461.9V468.7M407.5,461.9V482.2M409.5,461.9V468.7M411.5,461.9V482.2M412.5,461.9V489.0M415.5,455.1V461.9M419.5,455.1V468.7M422.5,455.1V461.9M423.5,455.1V461.9M425.5,455.1V461.9M426.5,455.1V461.9M427.5,455.1V461.9M430.5,455.1V461.9M431.5,455.1V461.9M434.5,455.1V482.2M440.5,455.1V461.9M441.5,455.1V475.4M444.5,455.1V461.9M446.5,461.9V475.4M448.5,461.9V495.8M449.5,461.9V468.7M450.5,461.9V468.7M451.5,461.9V468.7M452.5,461.9V468.7M455.5,461.9V468.7M456.5,461.9V482.2M458.5,461.9V475.4M459.5,461.9V468.7M462.5,461.9V468.7M467.5,461.9V482.2M470.5,461.9V495.8M473.5,461.9V468.7M474.5,461.9V468.7M476.5,461.9V468.7M477.5,461.9V468.7M479.5,461.9V468.7M481.5,461.9V475.4M483.5,461.9V482.2M484.5,461.9V482.2M487.5,461.9V468.7M493.5,461.9V468.7M496.5,461.9V468.7M504.5,461.9V468.7M506.5,461.9V468.7M509.5,461.9V468.7M510.5,461.9V482.2M512.5,461.9V482.2M513.5,461.9V468.7M514.5,461.9V468.7M517.5,461.9V468.7M519.5,461.9V468.7M520.5,461.9V468.7M521.5,461.9V468.7M523.5,461.9V468.7M528.5,461.9V475.4M532.5,468.7V475.4M533.5,468.7V489.0M535.5,468.7V475.4M536.5,468.7V475.4M539.5,468.7V495.8M543.5,468.7V475.4M546.5,468.7V475.4M547.5,468.7V482.2M550.5,475.4V482.2M551.5,475.4V482.2M552.5,475.4V482.2M555.5,475.4V482.2M559.5,475.4V482.2M560.5,475.4V482.2M561.5,475.4V482.2M563.5,475.4V495.8M566.5,475.4V482.2M567.5,475.4V482.2M570.5,475.4V482.2M571.5,475.4V482.2M573.5,475.4V489.0M574.5,475.4V489.0M579.5,475.4V489.0M581.5,475.4V482.2M584.5,475.4V495.8M587.5,475.4V482.2M589.5,475.4V509.4M590.5,475.4V482.2M594.5,475.4V482.2M595.5,475.4V489.0M597.5,475.4V482.2M598.5,475.4V482.2M600.5,475.4V482.2M604.5,475.4V482.2M606.5,475.4V482.2M608.5,475.4V482.2M609.5,475.4V482.2M613.5,475.4V489.0M614.5,475.4V495.8M615.5,475.4V482.2M616.5,475.4V482.2M619.5,475.4V482.2M620.5,468.7V482.2M623.5,468.7V482.2M627.5,468.7V475.4M628.5,468.7V482.2M629.5,468.7V495.8M630.5,468.7V475.4M632.5,468.7V475.4M634.5,468.7V482.2M640.5,468.7V475.4M641.5,468.7V475.4M642.5,468.7V475.4M643.5,468.7V482.2M644.5,468.7V475.4M645.5,468.7V475.4M647.5,468.7V475.4M649.5,468.7V475.4M654.5,461.9V468.7M655.5,461.9V468.7M661.5,461.9V468.7M662.5,461.9V475.4M664.5,461.9V468.7M667.5,461.9V468.7M668.5,461.9V468.7M670.5,461.9V468.7M672.5,461.9V468.7M676.5,461.9V475.4M677.5,461.9V468.7M679.5,461.9V468.7M682.5,461.9V468.7M683.5,461.9V468.7M686.5,461.9V468.7M690.5,461.9V468.7M692.5,461.9V468.7M693.5,461.9V468.7M695.5,461.9V468.7M697.5,461.9V468.7M699.5,461.9V468.7M703.5,461.9V468.7M704.5,461.9V468.7M705.5,461.9V468.7M708.5,461.9V468.7M710.5,461.9V468.7M711.5,461.9V475.4M713.5,461.9V468.7M714.5,461.9V475.4M717.5,461.9V468.7M719.5,461.9V468.7M720.5,461.9V475.4M724.5,461.9V475.4M725.5,461.9V468.7M726.5,461.9V468.7M732.5,461.9V468.7M733.5,461.9V468.7M735.5,468.7V482.2M738.5,468.7V475.4M739.5,468.7V475.4M740.5,468.7V495.8M743.5,468.7V475.4M744.5,468.7V475.4M745.5,468.7V482.2M747.5,468.7V482.2M754.5,468.7V475.4M756.5,468.7V489.0M757.5,468.7V475.4M758.5,468.7V475.4M759.5,468.7V475.4M761.5,468.7V475.4M763.5,468.7V475.4M764.5,468.7V475.4M765.5,468.7V475.4M769.5,468.7V475.4M774.5,468.7V475.4M781.5,468.7V475.4M782.5,468.7V475.4M784.5,468.7V475.4M787.5,468.7V475.4M790.5,468.7V482.2M791.5,468.7V475.4M793.5,468.7V475.4M799.5,468.7V482.2M800.5,475.4V482.2M802.5,475.4V482.2M805.5,475.4V482.2M806.5,475.4V482.2M807.5,475.4V482.2M809.5,475.4V482.2M810.5,475.4V482.2M813.5,475.4V482.2M815.5,475.4V495.8M817.5,475.4V482.2M821.5,468.7V489.0M825.5,468.7V475.4M827.5,468.7V475.4M829.5,468.7V482.2M832.5,468.7V495.8M834.5,468.7V482.2M837.5,468.7V475.4M844.5,468.7V475.4M847.5,468.7V475.4M848.5,468.7V482.2M850.5,468.7V475.4M852.5,468.7V475.4M856.5,468.7V475.4M858.5,468.7V475.4M860.5,468.7V475.4M861.5,468.7V482.2M862.5,461.9V468.7M866.5,461.9V468.7M867.5,461.9V468.7M869.5,461.9V468.7M872.5,461.9V468.7M877.5,461.9V468.7M879.5,461.9V468.7M880.5,461.9V468.7" stroke="#00ff00" stroke-width="1" fill="none"/>
<path d="M167.5,468.7V475.4M174.5,468.7V475.4M184.5,461.9V468.7M187.5,461.9V468.7M190.5,461.9V475.4M191.5,461.9V468.7M194.5,461.9V468.7M197.5,461.9V468.7M198.5,461.9V468.7M206.5,461.9V468.7M207.5,461.9V468.7M209.5,461.9V468.7M211.5,461.9V468.7M215.5,461.9V468.7M217.5,461.9V468.7M218.5,461.9V468.7M223.5,461.9V468.7M231.5,461.9V468.7M232.5,461.9V468.7M235.5,461.9V468.7M236.5,461.9V475.4M243.5,461.9V468.7M244.5,461.9V482.2M249.5,461.9V468.7M254.5,461.9V489.0M255.5,461.9V468.7M257.5,461.9V475.4M258.5,461.9V468.7M259.5,461.9V482.2M268.5,461.9V475.4M270.5,461.9V468.7M274.5,461.9V468.7M276.5,461.9V468.7M277.5,461.9V468.7M281.5,461.9V482.2M286.5,461.9V468.7M287.5,461.9V489.0M290.5,461.9V468.7M293.5,461.9V468.7M295.5,461.9V468.7M297.5,461.9V468.7M301.5,461.9V468.7M303.5,461.9V468.7M308.5,461.9V468.7M311.5,461.9V482.2M312.5,461.9V482.2M313.5,461.9V468.7M314.5,461.9V468.7M319.5,461.9V468.7M321.5,461.9V468.7M327.5,461.9V468.7M328.5,461.9V468.7M329.5,461.9V468.7M330.5,461.9V489.0M337.5,461.9V468.7M338.5,461.9V495.8M339.5,461.9V468.7M342.5,461.9V468.7M343.5,461.9V468.7M344.5,461.9V468.7M345.5,468.7V475.4M352.5,468.7V475.4M356.5,468.7V475.4M357.5,468.7V475.4M362.5,468.7V475.4M380.5,475.4V482.2M385.5,475.4V489.0M389.5,475.4V482.2M392.5,475.4V482.2M396.5,468.7V475.4M398.5,468.7V475.4M399.5,468.7V475.4M401.5,468.7V475.4M404.5,468.7V475.4M405.5,468.7V475.4M408.5,461.9V489.0M413.5,461.9V475.4M414.5,461.9V482.2M416.5,455.1V461.9M417.5,455.1V482.2M418.5,455.1V461.9M429.5,455.1V461.9M433.5,455.1V461.9M435.5,455.1V461.9M437.5,455.1V461.9M439.5,455.1V461.9M442.5,455.1V461.9M447.5,461.9V475.4M454.5,461.9V475.4M457.5,461.9V482.2M460.5,461.9V468.7M461.5,461.9V468.7M463.5,461.9V468.7M464.5,461.9V468.7M465.5,461.9V468.7M466.5,461.9V468.7M468.5,461.9V468.7M471.5,461.9V468.7M472.5,461.9V468.7M480.5,461.9V468.7M482.5,461.9V468.7M485.5,461.9V468.7M486.5,461.9V468.7M488.5,461.9V475.4M490.5,461.9V482.2M492.5,461.9V475.4M494.5,461.9V468.7M495.5,461.9V468.7M497.5,461.9V468.7M498.5,461.9V482.2M501.5,461.9V468.7M502.5,461.9V468.7M503.5,461.9V468.7M508.5,461.9V475.4M511.5,461.9V468.7M516.5,461.9V482.2M518.5,461.9V468.7M524.5,461.9V468.7M529.5,461.9V482.2M530.5,468.7V475.4M531.5,468.7V475.4M537.5,468.7V475.4M538.5,468.7V475.4M540.5,468.7V489.0M541.5,468.7V489.0M544.5,468.7V475.4M553.5,475.4V482.2M554.5,475.4V482.2M558.5,475.4V482.2M562.5,475.4V482.2M564.5,475.4V482.2M572.5,475.4V482.2M575.5,475.4V509.4M577.5,475.4V482.2M580.5,475.4V482.2M582.5,475.4V482.2M583.5,475.4V482.2M585.5,475.4V482.2M586.5,475.4V482.2M592.5,475.4V482.2M593.5,475.4V489.0M596.5,475.4V482.2M610.5,475.4V482.2M611.5,475.4V482.2M612.5,475.4V489.0M617.5,475.4V482.2M621.5,468.7V475.4M622.5,468.7V475.4M624.5,468.7V475.4M625.5,468.7V482.2M626.5,468.7V489.0M631.5,468.7V489.0M633.5,468.7V475.4M635.5,468.7V475.4M636.5,468.7V475.4M637.5,468.7V475.4M639.5,468.7V482.2M646.5,468.7V475.4M651.5,461.9V482.2M652.5,461.9V468.7M656.5,461.9V482.2M657.5,461.9V468.7M659.5,461.9V468.7M660.5,461.9V482.2M669.5,461.9V468.7M673.5,461.9V468.7M678.5,461.9V468.7M680.5,461.9V468.7M688.5,461.9V468.7M689.5,461.9V468.7M691.5,461.9V482.2M696.5,461.9V475.4M698.5,461.9V468.7M702.5,461.9V468.7M707.5,461.9V468.7M709.5,461.9V475.4M715.5,461.9V468.7M718.5,461.9V468.7M722.5,461.9V468.7M723.5,461.9V475.4M731.5,461.9V468.7M734.5,461.9V495.8M741.5,468.7V475.4M742.5,468.7V482.2M746.5,468.7V475.4M750.5,468.7V475.4M751.5,468.7V475.4M752.5,468.7V495.8M753.5,468.7V475.4M760.5,468.7V482.2M766.5,468.7V475.4M767.5,468.7V475.4M770.5,468.7V475.4M771.5,468.7V475.4M775.5,468.7V475.4M778.5,468.7V475.4M780.5,468.7V475.4M783.5,468.7V475.4M789.5,468.7V489.0M792.5,468.7V482.2M794.5,468.7V475.4M795.5,468.7V475.4M796.5,468.7V482.2M801.5,475.4V482.2M803.5,475.4V482.2M804.5,475.4V482.2M811.5,475.4V482.2M812.5,475.4V495.8M814.5,475.4V482.2M816.5,475.4V482.2M820.5,468.7V475.4M822.5,468.7V475.4M823.5,468.7V475.4M831.5,468.7V475.4M836.5,468.7V475.4M838.5,468.7V495.8M840.5,468.7V475.4M841.5,468.7V475.4M843.5,468.7V475.4M851.5,468.7V475.4M853.5,468.7V475.4M863.5,461.9V468.7M864.5,461.9V482.2M865.5,461.9V468.7M868.5,461.9V468.7M871.5,461.9V495.8M873.5,461.9V468.7M874.5,461.9V475.4M875.5,461.9V468.7M876.5,461.9V475.4" stroke="#00ff00" stroke-width="1" fill="none" opacity="0.55"/>
<path d="M166.5,689.3V692.6M167.5,689.2V692.4M167.5,692.4V697.8M168.5,689.0V692.3M169.5,688.9V692.1M170.5,688.7V692.0M171.5,688.6V691.8M172.5,688.4V691.7M173.5,688.3V691.6M174.5,688.2V691.4M175.5,688.0V691.3M175.5,691.3V693.7M176.5,687.9V691.1M177.5,687.7V691.0M177.5,691.0V693.4M178.5,687.6V690.9M179.5,687.6V690.9M180.5,687.6V690.9M181.5,687.6V690.9M182.5,687.6V690.9M183.5,687.6V690.9M184.5,687.6V690.9M185.5,687.6V690.9M186.5,687.6V690.9M186.5,690.9V693.2M187.5,687.6V690.9M188.5,687.6V690.9M189.5,687.6V690.9M190.5,687.6V690.9M191.5,687.6V690.9M192.5,687.6V690.9M193.5,687.6V690.9M194.5,687.6V690.9M195.5,687.6V690.9M196.5,687.6V690.9M197.5,687.6V690.9M198.5,687.6V690.9M199.5,687.6V690.9M200.5,687.6V690.9M201.5,687.6V690.9M202.5,687.7V690.9M203.5,687.7V690.9M203.5,690.9V696.3M204.5,687.7V690.9M205.5,687.7V690.9M206.5,687.7V690.9M207.5,687.7V690.9M208.5,687.7V690.9M209.5,687.7V690.9M210.5,687.7V690.9M211.5,687.7V690.9M212.5,687.7V690.9M213.5,687.7V690.9M214.5,687.7V690.9M215.5,687.7V690.9M216.5,687.7V690.9M217.5,687.7V690.9M217.5,690.9V693.3M218.5,687.7V690.9M219.5,687.7V690.9M220.5,687.7V690.9M221.5,687.7V691.0M221.5,691.0V696.4M222.5,687.7V691.0M223.5,687.7V691.0M224.5,687.7V691.0M225.5,687.7V691.0M226.5,687.7V691.0M227.5,687.7V691.0M228.5,687.7V691.0M228.5,691.0V693.3M229.5,687.7V691.0M229.5,691.0V696.4M230.5,687.7V691.0M230.5,691.0V693.3M231.5,687.7V691.0M232.5,687.7V691.0M233.5,687.7V691.0M234.5,687.7V691.0M234.5,691.0V693.4M235.5,687.7V691.0M236.5,687.7V691.0M237.5,687.7V691.0M238.5,687.7V691.0M238.5,691.0V696.4M239.5,687.7V691.0M240.5,687.7V691.0M241.5,687.7V691.0M242.5,687.7V691.0M243.5,687.7V691.0M243.5,691.0V693.4M244.5,687.7V691.0M244.5,691.0V693.4M245.5,687.7V691.0M246.5,687.7V691.0M247.5,687.8V691.0M248.5,687.8V691.0M249.5,687.8V691.0M250.5,687.8V691.0M251.5,687.8V691.0M252.5,687.8V691.0M252.5,691.0V693.4M253.5,687.8V691.0M254.5,687.8V691.0M254.5,691.0V695.1M255.5,687.8V691.0M256.5,687.8V691.0M257.5,687.8V691.0M258.5,687.8V691.0M259.5,687.8V691.0M260.5,687.8V691.0M261.5,687.8V691.0M262.5,687.8V691.0M263.5,687.8V691.0M264.5,687.8V691.0M264.5,691.0V693.4M265.5,687.8V691.1M266.5,687.8V691.1M267.5,687.8V691.1M268.5,687.8V691.1M269.5,687.8V691.1M270.5,687.8V691.1M271.5,687.8V691.1M272.5,687.8V691.1M273.5,687.8V691.1M274.5,687.8V691.1M275.5,687.8V691.1M276.5,687.8V691.1M277.5,687.8V691.1M278.5,687.8V691.1M279.5,687.8V691.1M280.5,687.8V691.1M281.5,687.8V691.1M282.5,687.8V691.1M283.5,687.8V691.1M284.5,687.8V691.1M285.5,687.8V691.1M286.5,687.8V691.1M287.5,687.8V691.1M288.5,687.8V691.1M288.5,691.1V695.2M289.5,687.8V691.1M290.5,687.8V691.1M291.5,687.8V691.1M291.5,691.1V696.5M292.5,687.9V691.1M293.5,687.9V691.1M293.5,691.1V693.5M294.5,687.9V691.1M295.5,687.9V691.1M296.5,687.9V691.1M297.5,687.9V691.1M298.5,687.9V691.1M298.5,691.1V693.5M299.5,687.9V691.1M300.5,687.9V691.1M301.5,687.9V691.1M302.5,687.9V691.1M303.5,687.9V691.1M304.5,687.9V691.1M305.5,687.9V691.1M306.5,687.9V691.1M307.5,687.9V691.1M308.5,687.9V691.1M309.5,687.9V691.1M310.5,687.9V691.2M311.5,687.9V691.2M312.5,687.9V691.2M313.5,687.9V691.2M314.5,687.9V691.2M314.5,691.2V693.5M315.5,687.9V691.2M315.5,691.2V696.6M316.5,687.9V691.2M317.5,687.9V691.2M318.5,687.9V691.2M319.5,687.9V691.2M320.5,687.9V691.2M321.5,687.9V691.2M322.5,687.9V691.2M323.5,687.9V691.2M324.5,687.9V691.2M325.5,687.9V691.2M326.5,687.9V691.2M327.5,687.9V691.2M327.5,691.2V693.6M328.5,687.9V691.2M329.5,687.9V691.2M329.5,691.2V695.3M330.5,687.9V691.2M330.5,691.2V693.6M331.5,688.0V691.2M332.5,688.0V691.3M333.5,688.1V691.3M334.5,688.1V691.4M334.5,691.4V693.7M335.5,688.1V691.4M336.5,688.2V691.4M337.5,688.2V691.5M338.5,688.2V691.5M339.5,688.3V691.5M340.5,688.3V691.6M340.5,691.6V694.0M341.5,688.4V691.6M342.5,688.4V691.7M343.5,688.4V691.7M344.5,688.5V691.7M345.5,688.5V691.8M346.5,688.6V691.8M347.5,688.6V691.9M348.5,688.6V691.9M349.5,688.7V691.9M350.5,688.7V692.0M351.5,688.8V692.0M352.5,688.8V692.0M353.5,688.8V692.1M354.5,688.9V692.1M355.5,688.9V692.2M356.5,688.9V692.2M357.5,689.0V692.2M357.5,692.2V694.6M358.5,689.0V692.3M358.5,692.3V694.7M359.5,689.1V692.3M360.5,689.1V692.4M360.5,692.4V694.7M361.5,689.1V692.4M362.5,689.2V692.4M363.5,689.2V692.5M364.5,689.3V692.5M365.5,689.3V692.6M366.5,689.3V692.6M367.5,689.3V692.6M368.5,689.3V692.6M368.5,692.6V696.7M369.5,689.4V692.6M370.5,689.4V692.6M370.5,692.6V695.0M371.5,689.4V692.7M372.5,689.4V692.7M373.5,689.4V692.7M374.5,689.5V692.7M374.5,692.7V695.1M375.5,689.5V692.7M376.5,689.5V692.8M377.5,689.5V692.8M378.5,689.5V692.8M379.5,689.5V692.8M380.5,689.6V692.8M380.5,692.8V695.2M381.5,689.6V692.8M382.5,689.6V692.9M383.5,689.6V692.9M384.5,689.6V692.9M385.5,689.7V692.9M386.5,689.7V692.9M387.5,689.7V693.0M388.5,689.7V693.0M389.5,689.7V693.0M390.5,689.7V693.0M390.5,693.0V695.4M391.5,689.8V693.0M392.5,689.8V693.0M393.5,689.8V693.1M394.5,689.8V693.1M395.5,689.8V693.1M396.5,689.8V693.0M397.5,689.7V692.9M398.5,689.6V692.9M399.5,689.5V692.8M400.5,689.5V692.7M401.5,689.4V692.6M401.5,692.6V698.1M402.5,689.3V692.6M403.5,689.2V692.5M404.5,689.2V692.4M404.5,692.4V694.8M405.5,689.1V692.3M406.5,689.0V692.3M407.5,688.9V692.2M408.5,688.8V692.1M409.5,688.8V692.0M410.5,688.7V692.0M411.5,688.6V691.9M412.5,688.5V691.8M413.5,688.5V691.7M414.5,688.4V691.7M415.5,688.3V691.6M416.5,688.2V691.5M417.5,688.2V691.4M417.5,691.4V693.8M418.5,688.1V691.3M418.5,691.3V693.7M419.5,688.0V691.3M420.5,687.9V691.2M421.5,687.8V691.1M421.5,691.1V693.4M422.5,687.7V690.9M423.5,687.5V690.8M424.5,687.4V690.7M424.5,690.7V693.0M425.5,687.3V690.5M426.5,687.1V690.4M426.5,690.4V692.8M427.5,687.0V690.2M428.5,686.9V690.1M429.5,686.7V690.0M430.5,686.6V689.8M430.5,689.8V693.9M431.5,686.4V689.7M432.5,686.3V689.6M433.5,686.2V689.4M434.5,686.0V689.3M435.5,685.9V689.2M436.5,686.0V689.2M437.5,686.0V689.3M438.5,686.1V689.4M439.5,686.2V689.4M440.5,686.2V689.5M441.5,686.3V689.6M442.5,686.4V689.6M443.5,686.4V689.7M443.5,689.7V692.1M444.5,686.5V689.8M445.5,686.6V689.8M446.5,686.7V689.9M447.5,686.8V690.0M448.5,686.9V690.1M448.5,690.1V692.5M449.5,686.9V690.2M450.5,687.0V690.3M451.5,687.1V690.4M452.5,687.2V690.5M453.5,687.3V690.6M454.5,687.4V690.7M455.5,687.5V690.7M455.5,690.7V693.1M456.5,687.6V690.8M457.5,687.7V690.9M458.5,687.8V691.0M459.5,687.8V691.1M460.5,687.9V691.2M461.5,687.9V691.2M462.5,687.9V691.2M462.5,691.2V695.3M463.5,687.9V691.2M463.5,691.2V693.6M464.5,687.9V691.2M465.5,687.9V691.2M466.5,687.9V691.2M467.5,687.9V691.2M468.5,687.9V691.2M469.5,687.9V691.2M470.5,687.9V691.2M471.5,687.9V691.2M472.5,687.9V691.2M473.5,687.9V691.2M474.5,687.9V691.2M475.5,687.9V691.2M476.5,687.9V691.2M477.5,687.9V691.2M478.5,687.9V691.2M478.5,691.2V693.6M479.5,687.9V691.2M479.5,691.2V693.6M480.5,687.9V691.2M481.5,687.9V691.2M482.5,687.9V691.2M483.5,687.9V691.2M484.5,687.9V691.2M485.5,687.9V691.2M485.5,691.2V693.6M486.5,687.9V691.2M487.5,687.9V691.2M488.5,687.9V691.2M489.5,687.9V691.2M490.5,687.9V691.2M491.5,687.9V691.2M492.5,687.9V691.2M493.5,687.9V691.2M494.5,687.9V691.2M495.5,687.9V691.2M496.5,687.9V691.2M496.5,691.2V696.6M497.5,687.9V691.2M498.5,687.9V691.2M498.5,691.2V696.6M499.5,687.9V691.2M500.5,687.9V691.2M501.5,687.9V691.2M502.5,687.9V691.2M503.5,687.9V691.2M504.5,687.9V691.2M505.5,687.9V691.2M506.5,687.9V691.2M507.5,687.9V691.2M508.5,687.9V691.2M509.5,687.9V691.2M510.5,687.9V691.2M511.5,687.9V691.2M512.5,687.9V691.2M513.5,687.9V691.2M514.5,687.9V691.2M515.5,687.9V691.2M516.5,687.9V691.2M517.5,687.9V691.2M518.5,687.9V691.2M519.5,687.9V691.2M519.5,691.2V696.6M520.5,687.9V691.2M521.5,688.0V691.2M522.5,688.0V691.3M522.5,691.3V693.7M523.5,688.1V691.3M524.5,688.1V691.4M525.5,688.1V691.4M526.5,688.2V691.4M527.5,688.2V691.5M528.5,688.3V691.5M529.5,688.3V691.6M530.5,688.3V691.6M531.5,688.4V691.6M532.5,688.4V691.7M533.5,688.5V691.7M534.5,688.5V691.8M535.5,688.5V691.8M536.5,688.6V691.8M537.5,688.6V691.9M537.5,691.9V696.0M538.5,688.7V691.9M539.5,688.7V692.0M540.5,688.8V692.0M540.5,692.0V696.1M541.5,688.8V692.1M542.5,688.8V692.1M543.5,688.9V692.1M544.5,688.9V692.2M545.5,689.0V692.2M546.5,689.0V692.3M547.5,689.1V692.3M548.5,689.1V692.4M549.5,689.2V692.4M550.5,689.2V692.5M551.5,689.3V692.6M552.5,689.4V692.6M553.5,689.4V692.7M553.5,692.7V696.8M554.5,689.5V692.7M555.5,689.5V692.8M556.5,689.6V692.9M557.5,689.7V692.9M558.5,689.7V693.0M559.5,689.8V693.0M560.5,689.8V693.1M561.5,689.8V693.1M561.5,693.1V695.5M562.5,689.8V693.1M563.5,689.8V693.1M564.5,689.8V693.0M565.5,689.8V693.0M565.5,693.0V695.4M566.5,689.8V693.0M567.5,689.7V693.0M568.5,689.7V693.0M569.5,689.7V693.0M570.5,689.7V693.0M570.5,693.0V697.0M571.5,689.7V692.9M572.5,689.7V692.9M573.5,689.7V692.9M574.5,689.6V692.9M575.5,689.6V692.9M576.5,689.6V692.9M577.5,689.6V692.9M578.5,689.6V692.9M578.5,692.9V695.2M579.5,689.6V692.8M580.5,689.6V692.8M581.5,689.6V692.8M582.5,689.5V692.8M583.5,689.5V692.8M584.5,689.5V692.8M585.5,689.5V692.8M586.5,689.5V692.7M587.5,689.5V692.7M587.5,692.7V696.8M588.5,689.5V692.7M588.5,692.7V695.1M589.5,689.4V692.7M590.5,689.4V692.7M591.5,689.4V692.7M592.5,689.4V692.7M593.5,689.4V692.6M594.5,689.4V692.6M595.5,689.4V692.6M596.5,689.3V692.6M597.5,689.3V692.6M597.5,692.6V695.0M598.5,689.3V692.6M598.5,692.6V695.0M599.5,689.3V692.6M600.5,689.3V692.6M601.5,689.3V692.5M602.5,689.2V692.5M603.5,689.2V692.5M604.5,689.2V692.4M605.5,689.1V692.4M606.5,689.1V692.3M607.5,689.1V692.3M608.5,689.0V692.3M608.5,692.3V694.7M609.5,689.0V692.2M610.5,689.0V692.2M611.5,688.9V692.2M612.5,688.9V692.1M612.5,692.1V694.5M613.5,688.9V692.1M614.5,688.8V692.1M615.5,688.8V692.0M616.5,688.8V692.0M617.5,688.7V692.0M617.5,692.0V694.4M618.5,688.7V691.9M619.5,688.6V691.9M620.5,688.6V691.9M620.5,691.9V697.3M621.5,688.6V691.8M622.5,688.5V691.8M622.5,691.8V695.9M623.5,688.5V691.8M623.5,691.8V694.1M624.5,688.5V691.7M625.5,688.4V691.7M626.5,688.4V691.7M627.5,688.4V691.6M628.5,688.3V691.6M629.5,688.3V691.6M630.5,688.3V691.5M631.5,688.2V691.5M631.5,691.5V695.6M632.5,688.2V691.5M633.5,688.2V691.4M634.5,688.1V691.4M635.5,688.1V691.4M636.5,688.1V691.3M637.5,688.0V691.3M638.5,688.0V691.3M639.5,688.0V691.2M640.5,687.9V691.2M640.5,691.2V693.6M641.5,687.8V691.1M642.5,687.7V691.0M642.5,691.0V693.3M643.5,687.6V690.8M644.5,687.4V690.7M645.5,687.3V690.6M646.5,687.2V690.5M647.5,687.1V690.3M648.5,687.0V690.2M649.5,686.8V690.1M650.5,686.7V690.0M651.5,686.7V690.0M652.5,686.7V690.0M653.5,686.7V690.0M654.5,686.8V690.0M655.5,686.8V690.0M656.5,686.8V690.0M657.5,686.8V690.0M658.5,686.8V690.1M659.5,686.8V690.1M660.5,686.8V690.1M661.5,686.8V690.1M662.5,686.8V690.1M663.5,686.9V690.1M664.5,686.9V690.1M665.5,686.9V690.1M666.5,686.9V690.1M667.5,686.9V690.2M668.5,686.9V690.2M669.5,686.9V690.2M670.5,686.9V690.2M670.5,690.2V695.6M671.5,686.9V690.2M672.5,687.0V690.2M673.5,687.0V690.2M674.5,687.0V690.2M675.5,687.0V690.2M676.5,687.0V690.3M677.5,687.0V690.3M678.5,687.0V690.3M679.5,687.0V690.3M679.5,690.3V692.7M680.5,687.0V690.3M681.5,687.1V690.3M682.5,687.1V690.3M683.5,687.1V690.3M684.5,687.1V690.3M685.5,687.1V690.4M686.5,687.1V690.4M687.5,687.1V690.4M687.5,690.4V695.8M688.5,687.1V690.4M689.5,687.1V690.4M690.5,687.1V690.4M691.5,687.2V690.4M692.5,687.2V690.4M693.5,687.2V690.4M694.5,687.2V690.5M695.5,687.2V690.5M696.5,687.2V690.5M696.5,690.5V692.8M697.5,687.2V690.5M698.5,687.2V690.5M699.5,687.2V690.5M700.5,687.3V690.5M701.5,687.3V690.5M702.5,687.3V690.5M703.5,687.3V690.6M704.5,687.3V690.6M705.5,687.3V690.6M706.5,687.3V690.6M707.5,687.3V690.6M708.5,687.3V690.6M709.5,687.4V690.6M709.5,690.6V693.0M710.5,687.4V690.6M711.5,687.4V690.6M712.5,687.4V690.7M713.5,687.4V690.7M714.5,687.4V690.7M715.5,687.4V690.7M715.5,690.7V693.1M716.5,687.4V690.7M716.5,690.7V693.1M717.5,687.5V690.7M718.5,687.5V690.7M719.5,687.5V690.7M720.5,687.5V690.7M721.5,687.5V690.8M722.5,687.5V690.8M723.5,687.5V690.8M724.5,687.5V690.8M725.5,687.5V690.8M726.5,687.6V690.8M726.5,690.8V693.2M727.5,687.6V690.8M728.5,687.6V690.8M728.5,690.8V693.2M729.5,687.6V690.8M730.5,687.6V690.9M731.5,687.6V690.9M732.5,687.6V690.9M732.5,690.9V693.3M733.5,687.6V690.9M733.5,690.9V693.3M734.5,687.6V690.9M734.5,690.9V693.3M735.5,687.7V690.9M735.5,690.9V693.3M736.5,687.7V690.9M737.5,687.7V690.9M738.5,687.7V690.9M739.5,687.7V691.0M740.5,687.7V691.0M741.5,687.7V691.0M742.5,687.7V691.0M743.5,687.7V691.0M743.5,691.0V693.4M744.5,687.8V691.0M745.5,687.8V691.0M745.5,691.0V695.1M746.5,687.8V691.0M747.5,687.8V691.0M747.5,691.0V693.4M748.5,687.8V691.1M749.5,687.8V691.1M749.5,691.1V693.4M750.5,687.8V691.1M751.5,687.8V691.1M752.5,687.8V691.1M752.5,691.1V693.5M753.5,687.9V691.1M754.5,687.9V691.1M755.5,687.9V691.1M756.5,687.9V691.2M756.5,691.2V693.5M757.5,687.9V691.2M758.5,687.9V691.2M759.5,687.9V691.2M760.5,687.9V691.2M761.5,688.0V691.2M761.5,691.2V693.6M762.5,688.0V691.2M762.5,691.2V693.6M763.5,688.0V691.2M763.5,691.2V693.6M764.5,688.0V691.3M765.5,688.0V691.3M766.5,688.0V691.3M767.5,688.1V691.3M768.5,688.1V691.3M769.5,688.1V691.3M770.5,688.1V691.4M771.5,688.1V691.4M771.5,691.4V695.5M772.5,688.1V691.4M773.5,688.2V691.4M774.5,688.2V691.4M775.5,688.2V691.4M776.5,688.2V691.5M777.5,688.2V691.5M778.5,688.2V691.5M779.5,688.3V691.5M780.5,688.3V691.5M781.5,688.3V691.6M782.5,688.3V691.6M783.5,688.3V691.6M783.5,691.6V695.7M784.5,688.3V691.6M785.5,688.4V691.6M786.5,688.4V691.6M787.5,688.4V691.7M787.5,691.7V695.7M788.5,688.4V691.7M789.5,688.4V691.7M790.5,688.4V691.7M791.5,688.5V691.7M791.5,691.7V694.1M792.5,688.5V691.7M793.5,688.5V691.8M794.5,688.5V691.8M795.5,688.5V691.8M796.5,688.5V691.8M797.5,688.6V691.8M798.5,688.6V691.8M799.5,688.6V691.9M799.5,691.9V695.9M800.5,688.6V691.9M801.5,688.6V691.9M802.5,688.6V691.8M803.5,688.6V691.8M803.5,691.8V694.2M804.5,688.5V691.8M805.5,688.5V691.8M806.5,688.5V691.8M807.5,688.5V691.7M808.5,688.5V691.7M809.5,688.4V691.7M810.5,688.4V691.7M811.5,688.4V691.7M812.5,688.4V691.6M813.5,688.4V691.6M814.5,688.3V691.6M815.5,688.3V691.6M816.5,688.3V691.5M817.5,688.3V691.5M818.5,688.2V691.5M819.5,688.2V691.5M820.5,688.2V691.5M821.5,688.2V691.4M822.5,688.2V691.4M823.5,688.1V691.4M824.5,688.1V691.4M825.5,688.1V691.4M825.5,691.4V693.7M826.5,688.1V691.3M827.5,688.1V691.3M828.5,688.0V691.3M828.5,691.3V693.7M829.5,688.0V691.3M830.5,688.0V691.3M830.5,691.3V693.6M831.5,688.0V691.2M831.5,691.2V693.6M832.5,688.0V691.2M833.5,687.9V691.2M834.5,687.9V691.2M835.5,687.9V691.2M835.5,691.2V693.5M836.5,687.9V691.1M837.5,687.9V691.1M838.5,687.8V691.1M839.5,687.8V691.1M839.5,691.1V693.5M840.5,687.8V691.1M841.5,687.8V691.0M842.5,687.8V691.0M843.5,687.7V691.0M844.5,687.7V691.0M845.5,687.7V691.0M845.5,691.0V693.3M846.5,687.7V690.9M847.5,687.7V690.9M848.5,687.6V690.9M849.5,687.6V690.9M850.5,687.6V690.9M851.5,687.6V690.9M852.5,687.6V690.9M853.5,687.6V690.9M854.5,687.6V690.9M855.5,687.6V690.9M855.5,690.9V694.9M856.5,687.6V690.9M856.5,690.9V694.9M857.5,687.6V690.9M858.5,687.6V690.9M859.5,687.6V690.9M860.5,687.6V690.9M861.5,687.6V690.9M861.5,690.9V693.2M862.5,687.6V690.9M863.5,687.6V690.9M864.5,687.6V690.9M864.5,690.9V696.3M865.5,687.6V690.9M865.5,690.9V694.9M866.5,687.6V690.9M866.5,690.9V693.2M867.5,687.6V690.9M868.5,687.6V690.9M868.5,690.9V693.2M869.5,687.6V690.9M870.5,687.6V690.9M870.5,690.9V696.3M871.5,687.6V690.9M872.5,687.6V690.9M873.5,687.6V690.9M874.5,687.6V690.9M875.5,687.6V690.9M875.5,690.9V693.2M876.5,687.6V690.9M877.5,687.6V690.9M878.5,687.6V690.9M878.5,690.9V693.2M879.5,687.6V690.9M880.5,687.6V690.9" stroke="#ff00ff" stroke-width="1" fill="none"/>
<path d="M166.5,692.6V696.6M179.5,690.9V693.2M181.5,690.9V694.9M199.5,690.9V695.0M205.5,690.9V693.3M210.5,690.9V693.3M213.5,690.9V696.4M218.5,690.9V695.0M227.5,691.0V695.0M233.5,691.0V695.1M236.5,691.0V693.4M240.5,691.0V695.1M245.5,691.0V693.4M247.5,691.0V695.1M255.5,691.0V693.4M256.5,691.0V695.1M263.5,691.0V695.1M269.5,691.1V693.4M279.5,691.1V693.5M280.5,691.1V693.5M290.5,691.1V693.5M294.5,691.1V695.2M295.5,691.1V693.5M296.5,691.1V695.2M308.5,691.1V693.5M313.5,691.2V693.5M318.5,691.2V696.6M325.5,691.2V695.3M341.5,691.6V694.0M343.5,691.7V695.8M356.5,692.2V694.6M364.5,692.5V696.6M365.5,692.6V696.6M367.5,692.6V695.0M373.5,692.7V695.1M376.5,692.8V695.1M386.5,692.9V695.3M391.5,693.0V695.4M392.5,693.0V695.4M410.5,692.0V697.4M411.5,691.9V694.3M412.5,691.8V694.2M413.5,691.7V694.1M423.5,690.8V693.2M429.5,690.0V694.0M433.5,689.4V691.8M436.5,689.2V694.7M440.5,689.5V691.9M454.5,690.7V693.0M465.5,691.2V693.6M466.5,691.2V693.6M467.5,691.2V693.6M475.5,691.2V695.3M480.5,691.2V693.6M482.5,691.2V693.6M483.5,691.2V693.6M484.5,691.2V695.3M492.5,691.2V693.6M495.5,691.2V693.6M507.5,691.2V696.6M508.5,691.2V695.3M510.5,691.2V693.6M511.5,691.2V693.6M512.5,691.2V693.6M515.5,691.2V695.3M517.5,691.2V693.6M520.5,691.2V696.6M528.5,691.5V695.6M529.5,691.6V693.9M530.5,691.6V694.0M531.5,691.6V695.7M532.5,691.7V694.1M533.5,691.7V694.1M535.5,691.8V695.9M538.5,691.9V694.3M541.5,692.1V696.1M543.5,692.1V694.5M548.5,692.4V694.8M564.5,693.0V695.4M569.5,693.0V695.4M571.5,692.9V697.0M579.5,692.8V695.2M581.5,692.8V695.2M584.5,692.8V698.2M604.5,692.4V696.5M605.5,692.4V694.8M606.5,692.3V694.7M611.5,692.2V694.6M614.5,692.1V694.5M621.5,691.8V694.2M625.5,691.7V694.1M626.5,691.7V694.0M629.5,691.6V695.6M649.5,690.1V695.5M676.5,690.3V695.7M682.5,690.3V692.7M684.5,690.3V692.7M686.5,690.4V694.4M692.5,690.4V692.8M705.5,690.6V692.9M707.5,690.6V696.0M719.5,690.7V696.2M727.5,690.8V693.2M731.5,690.9V693.2M748.5,691.1V695.1M754.5,691.1V693.5M755.5,691.1V696.6M760.5,691.2V695.3M769.5,691.3V693.7M770.5,691.4V695.4M789.5,691.7V697.1M797.5,691.8V694.2M809.5,691.7V694.1M810.5,691.7V695.7M821.5,691.4V693.8M823.5,691.4V695.5M836.5,691.1V693.5M837.5,691.1V693.5M840.5,691.1V693.4M853.5,690.9V693.2M854.5,690.9V693.2M860.5,690.9V696.3M867.5,690.9V693.2" stroke="#ff00ff" stroke-width="1" fill="none" opacity="0.5"/>
</svg>
<!-- legend -->
<div class="a" style="left:53px;top:117px;width:27px;height:2px;background:#ff2020"></div>
<div class="a" style="left:131px;top:117px;width:27px;height:2px;background:#ff20ff"></div>
<div class="a" style="left:209px;top:117px;width:27px;height:2px;background:#2020ff"></div>
<div class="a" style="left:287px;top:117px;width:27px;height:2px;background:#20ff20"></div>
<!-- y labels -->
<div class="ylab" style="left:26px;top:136px">90</div>
<div class="ylab" style="left:26px;top:204px">80</div>
<div class="ylab" style="left:26px;top:272px">70</div>
<div class="ylab" style="left:26px;top:340px">60</div>
<div class="ylab" style="left:26px;top:408px">50</div>
<div class="ylab" style="left:26px;top:475px">40</div>
<div class="ylab" style="left:26px;top:543px">30</div>
<div class="ylab" style="left:26px;top:611px">20</div>
<div class="ylab" style="left:26px;top:679px">10</div>
<div class="ylab" style="left:26px;top:747px">0</div>

<!-- right panel -->
<div class="a" style="left:1055px;top:70px;width:136px;height:667px;background:#f3f3f3;border:1px solid #d4d4d4"></div>
<div class="a" style="left:1122px;top:692px;width:55px;height:18px;background:#fff;border-radius:2px"></div>
<svg class="a" style="left:1164px;top:698px" width="9" height="6"><path d="M0.5 0.5 L4.5 4.5 L8.5 0.5" stroke="#888" fill="none"/></svg>
<div class="a" style="left:1055px;top:745px;width:134px;height:23px;background:#fff;border:1px solid #c8c8c8;border-radius:4px"></div>
<div class="a" style="left:1117px;top:751px;width:12px;height:13px;background:linear-gradient(#e8e8e8 0,#e8e8e8 3px,#1a6ad8 3px,#1a6ad8 6px,#ddd 6px,#ddd 8px,#aaa 8px,#aaa 9px,#ddd 9px);border:1px solid #888;box-sizing:border-box"></div>

<!-- status bars -->
<div class="bar" style="left:8px;top:779px;width:95px"><div class="seg gr" style="left:0;width:100%"></div></div>
<div class="bar" style="left:106px;top:779px;width:492px"><div class="seg pk" style="left:0;width:49px"></div><div class="seg yl" style="left:49px;width:157px"></div></div>
<div class="bar" style="left:601px;top:779px;width:244px"><div class="seg pk" style="left:0;width:52px"></div><div class="seg yl" style="left:52px;width:18px"></div></div>
<div class="bar" style="left:848px;top:779px;width:244px"><div class="seg pk" style="left:0;width:52px"></div><div class="seg yl" style="left:52px;width:53px"></div></div>
<div class="bar" style="left:1096px;top:779px;width:95px"><div class="seg gr" style="left:0;width:100%"></div></div>
<div class="bar" style="left:8px;top:802px;width:95px"><div class="seg gr" style="left:0;width:100%"></div></div>
<div class="bar" style="left:106px;top:802px;width:492px"><div class="seg pk" style="left:0;width:49px"></div><div class="seg yl" style="left:49px;width:196px"></div><div class="seg gr" style="left:245px;width:49px"></div></div>
<div class="bar" style="left:601px;top:802px;width:491px"><div class="seg pk" style="left:0;width:161px"></div><div class="seg yl" style="left:161px;width:49px"></div></div>
<div class="bar" style="left:1096px;top:802px;width:95px"><div class="seg gr" style="left:0;width:100%"></div></div>

<!-- status strip -->
<div class="a" style="left:0;top:826px;width:1200px;height:1px;background:#d8d8d8"></div>
<div class="a" style="left:392px;top:829px;width:1px;height:18px;background:#999"></div>
<div class="a" style="left:790px;top:829px;width:1px;height:18px;background:#999"></div>
<div class="a" style="left:1186px;top:829px;width:1px;height:18px;background:#aaa"></div>
<div class="a" style="left:0;top:848px;width:1200px;height:2px;background:#111"></div>
<div class="a" style="left:1199px;top:0;width:1px;height:850px;background:#111"></div>

<svg class="a" style="left:1186px;top:836px" width="12" height="12"><g fill="#999"><rect x="8" y="0" width="1.5" height="1.5"/><rect x="8" y="4" width="1.5" height="1.5"/><rect x="4" y="4" width="1.5" height="1.5"/><rect x="8" y="8" width="1.5" height="1.5"/><rect x="4" y="8" width="1.5" height="1.5"/><rect x="0" y="8" width="1.5" height="1.5"/></g></svg>
<div style="position:absolute;left:21.25px;top:4.94px;font-family:'Liberation Sans';font-size:10.9px;font-weight:normal;font-style:normal;color:#5a5a5a;white-space:nowrap;line-height:normal;transform:scaleX(0.7890);transform-origin:0 0;">Signal Analyzer</div>
<div style="position:absolute;left:16.25px;top:36.25px;font-family:'Liberation Sans';font-size:11.77px;font-weight:bold;font-style:normal;color:#1a1acc;white-space:nowrap;line-height:normal;transform:scaleX(0.7745);transform-origin:0 0;">TBS 5927 USB DVB-S2 Tuner</div>
<div style="position:absolute;left:31.00px;top:53.42px;font-family:'Liberation Sans';font-size:10.03px;font-weight:normal;font-style:normal;color:#2a2a2a;white-space:nowrap;line-height:normal;transform:scaleX(0.8058);transform-origin:0 0;-webkit-text-stroke:0.25px #2a2a2a;">4.0W - Amos 3/7 (ID: 3560) @ LOF1: 9750000, LOF2: 0, LOFSW: 0</div>
<div style="position:absolute;left:278.40px;top:11.39px;font-family:'Liberation Serif';font-size:11.91px;font-weight:bold;font-style:normal;color:#111;white-space:nowrap;line-height:normal;transform:scaleX(1.0966);transform-origin:0 0;">PF Prodelin 450_Lučenec/Slovakia</div>
<div style="position:absolute;left:293.50px;top:25.09px;font-family:'Liberation Serif';font-size:11.91px;font-weight:bold;font-style:normal;color:#111;white-space:nowrap;line-height:normal;transform:scaleX(1.0594);transform-origin:0 0;">Amos 3 at 4.0°W_Middle East</div>
<div style="position:absolute;left:311.40px;top:38.89px;font-family:'Liberation Serif';font-size:11.91px;font-weight:bold;font-style:normal;color:#111;white-space:nowrap;line-height:normal;transform:scaleX(1.0328);transform-origin:0 0;">10 890 MHz_V : YES</div>
<div style="position:absolute;left:299.30px;top:52.89px;font-family:'Liberation Serif';font-size:11.91px;font-weight:bold;font-style:normal;color:#111;white-space:nowrap;line-height:normal;transform:scaleX(1.0306);transform-origin:0 0;">Locked UPtime : 80:02:57</div>
<div style="position:absolute;left:30.25px;top:82.47px;font-family:'Liberation Sans';font-size:11.63px;font-weight:bold;font-style:normal;color:#111;white-space:nowrap;line-height:normal;transform:scaleX(0.6764);transform-origin:0 0;">BS Mode</div>
<div style="position:absolute;left:110.80px;top:82.37px;font-family:'Liberation Sans';font-size:11.63px;font-weight:bold;font-style:normal;color:#111;white-space:nowrap;line-height:normal;transform:scaleX(0.7145);transform-origin:0 0;">DT Mode</div>
<div style="position:absolute;left:187.10px;top:82.87px;font-family:'Liberation Sans';font-size:11.63px;font-weight:bold;font-style:normal;color:#111;white-space:nowrap;line-height:normal;transform:scaleX(0.7170);transform-origin:0 0;">Signal Mon.</div>
<div style="position:absolute;left:274.80px;top:82.37px;font-family:'Liberation Sans';font-size:11.63px;font-weight:bold;font-style:normal;color:#111;white-space:nowrap;line-height:normal;transform:scaleX(0.6276);transform-origin:0 0;">TSA (OK)</div>
<div style="position:absolute;left:347.40px;top:82.37px;font-family:'Liberation Sans';font-size:11.63px;font-weight:bold;font-style:normal;color:#111;white-space:nowrap;line-height:normal;transform:scaleX(0.7072);transform-origin:0 0;">AV (Opening)</div>
<div style="position:absolute;left:86.76px;top:107.19px;font-family:'Liberation Sans';font-size:15.26px;font-weight:normal;font-style:normal;color:#111;white-space:nowrap;line-height:normal;transform:scaleX(0.7415);transform-origin:0 0;-webkit-text-stroke:0.3px #111;">BER</div>
<div style="position:absolute;left:165.30px;top:107.19px;font-family:'Liberation Sans';font-size:15.26px;font-weight:normal;font-style:normal;color:#111;white-space:nowrap;line-height:normal;transform:scaleX(0.7302);transform-origin:0 0;-webkit-text-stroke:0.3px #111;">SNR</div>
<div style="position:absolute;left:242.70px;top:107.19px;font-family:'Liberation Sans';font-size:15.26px;font-weight:normal;font-style:normal;color:#111;white-space:nowrap;line-height:normal;transform:scaleX(0.7128);transform-origin:0 0;-webkit-text-stroke:0.3px #111;">Quality</div>
<div style="position:absolute;left:319.72px;top:107.19px;font-family:'Liberation Sans';font-size:15.26px;font-weight:normal;font-style:normal;color:#111;white-space:nowrap;line-height:normal;transform:scaleX(0.7842);transform-origin:0 0;-webkit-text-stroke:0.3px #111;">Level</div>
<div style="position:absolute;left:1062.00px;top:79.80px;font-family:'Liberation Sans';font-size:11.05px;font-weight:bold;font-style:normal;color:#1a1a98;white-space:nowrap;line-height:normal;transform:scaleX(0.6976);transform-origin:0 0;-webkit-text-stroke:0.3px #1a1a98;">Transponder (A0) [BS]</div>
<div style="position:absolute;left:1061.80px;top:106.30px;font-family:'Liberation Sans';font-size:11.05px;font-weight:normal;font-style:normal;color:#2a2a2a;white-space:nowrap;line-height:normal;transform:scaleX(0.7483);transform-origin:0 0;-webkit-text-stroke:0.3px #2a2a2a;">Frequency:</div>
<div style="position:absolute;left:1121.40px;top:106.30px;font-family:'Liberation Sans';font-size:11.05px;font-weight:bold;font-style:normal;color:#0e6e0e;white-space:nowrap;line-height:normal;transform:scaleX(0.7481);transform-origin:0 0;">10889,749 MHz</div>
<div style="position:absolute;left:1061.80px;top:140.02px;font-family:'Liberation Sans';font-size:11.05px;font-weight:normal;font-style:normal;color:#2a2a2a;white-space:nowrap;line-height:normal;transform:scaleX(0.7872);transform-origin:0 0;-webkit-text-stroke:0.3px #2a2a2a;">Polarization:</div>
<div style="position:absolute;left:1121.40px;top:140.02px;font-family:'Liberation Sans';font-size:11.05px;font-weight:bold;font-style:normal;color:#0e6e0e;white-space:nowrap;line-height:normal;transform:scaleX(0.7009);transform-origin:0 0;">Vertical</div>
<div style="position:absolute;left:1061.80px;top:173.74px;font-family:'Liberation Sans';font-size:11.05px;font-weight:normal;font-style:normal;color:#2a2a2a;white-space:nowrap;line-height:normal;transform:scaleX(0.7428);transform-origin:0 0;-webkit-text-stroke:0.3px #2a2a2a;">Symbol Rate:</div>
<div style="position:absolute;left:1121.40px;top:173.74px;font-family:'Liberation Sans';font-size:11.05px;font-weight:bold;font-style:normal;color:#0e6e0e;white-space:nowrap;line-height:normal;transform:scaleX(0.7264);transform-origin:0 0;">27497,547 KS/s</div>
<div style="position:absolute;left:1061.80px;top:207.46px;font-family:'Liberation Sans';font-size:11.05px;font-weight:normal;font-style:normal;color:#2a2a2a;white-space:nowrap;line-height:normal;transform:scaleX(0.7819);transform-origin:0 0;-webkit-text-stroke:0.3px #2a2a2a;">Standard:</div>
<div style="position:absolute;left:1121.40px;top:207.46px;font-family:'Liberation Sans';font-size:11.05px;font-weight:bold;font-style:normal;color:#0e6e0e;white-space:nowrap;line-height:normal;transform:scaleX(0.6941);transform-origin:0 0;">DVB-S</div>
<div style="position:absolute;left:1061.80px;top:241.18px;font-family:'Liberation Sans';font-size:11.05px;font-weight:normal;font-style:normal;color:#2a2a2a;white-space:nowrap;line-height:normal;transform:scaleX(0.8380);transform-origin:0 0;-webkit-text-stroke:0.3px #2a2a2a;">Modulation:</div>
<div style="position:absolute;left:1121.40px;top:241.18px;font-family:'Liberation Sans';font-size:11.05px;font-weight:bold;font-style:normal;color:#0e6e0e;white-space:nowrap;line-height:normal;transform:scaleX(0.6735);transform-origin:0 0;">QPSK</div>
<div style="position:absolute;left:1061.80px;top:274.90px;font-family:'Liberation Sans';font-size:11.05px;font-weight:normal;font-style:normal;color:#2a2a2a;white-space:nowrap;line-height:normal;transform:scaleX(0.6456);transform-origin:0 0;-webkit-text-stroke:0.3px #2a2a2a;">FEC:</div>
<div style="position:absolute;left:1121.40px;top:274.90px;font-family:'Liberation Sans';font-size:11.05px;font-weight:bold;font-style:normal;color:#0e6e0e;white-space:nowrap;line-height:normal;transform:scaleX(0.8480);transform-origin:0 0;">5/6</div>
<div style="position:absolute;left:1061.80px;top:308.62px;font-family:'Liberation Sans';font-size:11.05px;font-weight:normal;font-style:normal;color:#2a2a2a;white-space:nowrap;line-height:normal;transform:scaleX(0.8260);transform-origin:0 0;-webkit-text-stroke:0.3px #2a2a2a;">RollOff:</div>
<div style="position:absolute;left:1121.40px;top:308.62px;font-family:'Liberation Sans';font-size:11.05px;font-weight:bold;font-style:normal;color:#0e6e0e;white-space:nowrap;line-height:normal;transform:scaleX(0.7258);transform-origin:0 0;">0.35</div>
<div style="position:absolute;left:1061.80px;top:342.34px;font-family:'Liberation Sans';font-size:11.05px;font-weight:normal;font-style:normal;color:#2a2a2a;white-space:nowrap;line-height:normal;transform:scaleX(0.8003);transform-origin:0 0;-webkit-text-stroke:0.3px #2a2a2a;">Pilot:</div>
<div style="position:absolute;left:1121.40px;top:342.34px;font-family:'Liberation Sans';font-size:11.05px;font-weight:normal;font-style:normal;color:#2a2a2a;white-space:nowrap;line-height:normal;transform:scaleX(0.6625);transform-origin:0 0;-webkit-text-stroke:0.3px #2a2a2a;">OFF</div>
<div style="position:absolute;left:1061.80px;top:376.06px;font-family:'Liberation Sans';font-size:11.05px;font-weight:normal;font-style:normal;color:#2a2a2a;white-space:nowrap;line-height:normal;transform:scaleX(0.7539);transform-origin:0 0;-webkit-text-stroke:0.3px #2a2a2a;">Spectrum:</div>
<div style="position:absolute;left:1121.40px;top:376.06px;font-family:'Liberation Sans';font-size:11.05px;font-weight:bold;font-style:normal;color:#0e6e0e;white-space:nowrap;line-height:normal;transform:scaleX(0.7403);transform-origin:0 0;">Inverted</div>
<div style="position:absolute;left:1061.80px;top:409.78px;font-family:'Liberation Sans';font-size:11.05px;font-weight:normal;font-style:normal;color:#2a2a2a;white-space:nowrap;line-height:normal;transform:scaleX(0.7185);transform-origin:0 0;-webkit-text-stroke:0.3px #2a2a2a;">Frame Type:</div>
<div style="position:absolute;left:1121.40px;top:409.78px;font-family:'Liberation Sans';font-size:11.05px;font-weight:normal;font-style:normal;color:#2a2a2a;white-space:nowrap;line-height:normal;transform:scaleX(0.7843);transform-origin:0 0;-webkit-text-stroke:0.3px #2a2a2a;">Long Frame</div>
<div style="position:absolute;left:1061.80px;top:443.50px;font-family:'Liberation Sans';font-size:11.05px;font-weight:normal;font-style:normal;color:#2a2a2a;white-space:nowrap;line-height:normal;transform:scaleX(0.7852);transform-origin:0 0;-webkit-text-stroke:0.3px #2a2a2a;">Code Mode:</div>
<div style="position:absolute;left:1121.40px;top:443.50px;font-family:'Liberation Sans';font-size:11.05px;font-weight:normal;font-style:normal;color:#2a2a2a;white-space:nowrap;line-height:normal;transform:scaleX(0.7133);transform-origin:0 0;-webkit-text-stroke:0.3px #2a2a2a;">CCM</div>
<div style="position:absolute;left:1061.80px;top:477.22px;font-family:'Liberation Sans';font-size:11.05px;font-weight:normal;font-style:normal;color:#2a2a2a;white-space:nowrap;line-height:normal;transform:scaleX(0.7545);transform-origin:0 0;-webkit-text-stroke:0.3px #2a2a2a;">Stream type:</div>
<div style="position:absolute;left:1121.40px;top:477.22px;font-family:'Liberation Sans';font-size:11.05px;font-weight:normal;font-style:normal;color:#2a2a2a;white-space:nowrap;line-height:normal;transform:scaleX(0.7928);transform-origin:0 0;-webkit-text-stroke:0.3px #2a2a2a;">Transport</div>
<div style="position:absolute;left:1061.17px;top:510.94px;font-family:'Liberation Sans';font-size:11.05px;font-weight:normal;font-style:normal;color:#2a2a2a;white-space:nowrap;line-height:normal;transform:scaleX(0.6330);transform-origin:0 0;-webkit-text-stroke:0.3px #2a2a2a;">ISSYI</div>
<div style="position:absolute;left:1121.40px;top:510.94px;font-family:'Liberation Sans';font-size:11.05px;font-weight:normal;font-style:normal;color:#2a2a2a;white-space:nowrap;line-height:normal;transform:scaleX(0.6535);transform-origin:0 0;-webkit-text-stroke:0.3px #2a2a2a;">OFF</div>
<div style="position:absolute;left:1061.80px;top:544.66px;font-family:'Liberation Sans';font-size:11.05px;font-weight:normal;font-style:normal;color:#2a2a2a;white-space:nowrap;line-height:normal;transform:scaleX(0.6990);transform-origin:0 0;-webkit-text-stroke:0.3px #2a2a2a;">NPD:</div>
<div style="position:absolute;left:1121.40px;top:544.66px;font-family:'Liberation Sans';font-size:11.05px;font-weight:normal;font-style:normal;color:#2a2a2a;white-space:nowrap;line-height:normal;transform:scaleX(0.6535);transform-origin:0 0;-webkit-text-stroke:0.3px #2a2a2a;">OFF</div>
<div style="position:absolute;left:1061.80px;top:578.38px;font-family:'Liberation Sans';font-size:11.05px;font-weight:normal;font-style:normal;color:#2a2a2a;white-space:nowrap;line-height:normal;transform:scaleX(0.6927);transform-origin:0 0;-webkit-text-stroke:0.3px #2a2a2a;">RF Level:</div>
<div style="position:absolute;left:1121.40px;top:578.38px;font-family:'Liberation Sans';font-size:11.05px;font-weight:bold;font-style:normal;color:#0e6e0e;white-space:nowrap;line-height:normal;transform:scaleX(0.7312);transform-origin:0 0;">-44 dBm</div>
<div style="position:absolute;left:1061.80px;top:612.10px;font-family:'Liberation Sans';font-size:11.05px;font-weight:normal;font-style:normal;color:#2a2a2a;white-space:nowrap;line-height:normal;transform:scaleX(0.7444);transform-origin:0 0;-webkit-text-stroke:0.3px #2a2a2a;">BitRate:</div>
<div style="position:absolute;left:1121.40px;top:612.10px;font-family:'Liberation Sans';font-size:11.05px;font-weight:bold;font-style:normal;color:#0e6e0e;white-space:nowrap;line-height:normal;transform:scaleX(0.7811);transform-origin:0 0;">45,817 Mbit/s</div>
<div style="position:absolute;left:1061.80px;top:645.82px;font-family:'Liberation Sans';font-size:11.05px;font-weight:normal;font-style:normal;color:#2a2a2a;white-space:nowrap;line-height:normal;transform:scaleX(0.7893);transform-origin:0 0;-webkit-text-stroke:0.3px #2a2a2a;">CarrierWidth:</div>
<div style="position:absolute;left:1121.40px;top:645.82px;font-family:'Liberation Sans';font-size:11.05px;font-weight:bold;font-style:normal;color:#0e6e0e;white-space:nowrap;line-height:normal;transform:scaleX(0.7512);transform-origin:0 0;">37,120 MHz</div>
<div style="position:absolute;left:1061.80px;top:694.40px;font-family:'Liberation Sans';font-size:11.05px;font-weight:normal;font-style:normal;color:#2a2a2a;white-space:nowrap;line-height:normal;transform:scaleX(0.7014);transform-origin:0 0;-webkit-text-stroke:0.3px #2a2a2a;">MIS (0):</div>
<div style="position:absolute;left:1124.40px;top:694.40px;font-family:'Liberation Sans';font-size:11.05px;font-weight:normal;font-style:normal;color:#2a2a2a;white-space:nowrap;line-height:normal;transform:scaleX(0.7754);transform-origin:0 0;-webkit-text-stroke:0.3px #2a2a2a;">Single</div>
<div style="position:absolute;left:9.70px;top:783.60px;font-family:'Liberation Sans';font-size:10.17px;font-weight:bold;font-style:normal;color:#111;white-space:nowrap;line-height:normal;transform:scaleX(0.7472);transform-origin:0 0;">Present</div>
<div style="position:absolute;left:110.00px;top:783.60px;font-family:'Liberation Sans';font-size:10.17px;font-weight:bold;font-style:normal;color:#111;white-space:nowrap;line-height:normal;transform:scaleX(0.7623);transform-origin:0 0;">Level: 42%</div>
<div style="position:absolute;left:603.00px;top:783.60px;font-family:'Liberation Sans';font-size:10.17px;font-weight:bold;font-style:normal;color:#111;white-space:nowrap;line-height:normal;transform:scaleX(0.7284);transform-origin:0 0;">preBER: 4,1E-2</div>
<div style="position:absolute;left:850.50px;top:783.60px;font-family:'Liberation Sans';font-size:10.17px;font-weight:bold;font-style:normal;color:#111;white-space:nowrap;line-height:normal;transform:scaleX(0.6992);transform-origin:0 0;">BER: 1,5E-3</div>
<div style="position:absolute;left:1098.00px;top:783.60px;font-family:'Liberation Sans';font-size:10.17px;font-weight:bold;font-style:normal;color:#111;white-space:nowrap;line-height:normal;transform:scaleX(0.8236);transform-origin:0 0;">Input (~40,34 Mbps)</div>
<div style="position:absolute;left:9.70px;top:806.30px;font-family:'Liberation Sans';font-size:10.17px;font-weight:bold;font-style:normal;color:#111;white-space:nowrap;line-height:normal;transform:scaleX(0.7067);transform-origin:0 0;">Lock</div>
<div style="position:absolute;left:110.00px;top:806.30px;font-family:'Liberation Sans';font-size:10.17px;font-weight:bold;font-style:normal;color:#111;white-space:nowrap;line-height:normal;transform:scaleX(0.7796);transform-origin:0 0;">Quality: 60%</div>
<div style="position:absolute;left:605.30px;top:806.30px;font-family:'Liberation Sans';font-size:10.17px;font-weight:bold;font-style:normal;color:#111;white-space:nowrap;line-height:normal;transform:scaleX(0.7852);transform-origin:0 0;">SNR: 8,5 dB (Margin: 2,0 dB | Very Poor)</div>
<div style="position:absolute;left:1098.00px;top:806.30px;font-family:'Liberation Sans';font-size:10.17px;font-weight:bold;font-style:normal;color:#111;white-space:nowrap;line-height:normal;transform:scaleX(0.7072);transform-origin:0 0;">Sync TS</div>
<div style="position:absolute;left:141.10px;top:830.51px;font-family:'Liberation Sans';font-size:11.92px;font-weight:bold;font-style:normal;color:#111;white-space:nowrap;line-height:normal;transform:scaleX(0.7231);transform-origin:0 0;">Locked -&gt; Uptime: 80:02:57</div>
<div style="position:absolute;left:536.70px;top:830.51px;font-family:'Liberation Sans';font-size:11.92px;font-weight:bold;font-style:normal;color:#111;white-space:nowrap;line-height:normal;transform:scaleX(0.7037);transform-origin:0 0;">SYNC 419 | TEI 3 | CC 24868</div>
<div style="position:absolute;left:914.10px;top:830.51px;font-family:'Liberation Sans';font-size:11.92px;font-weight:bold;font-style:normal;color:#111;white-space:nowrap;line-height:normal;transform:scaleX(0.7076);transform-origin:0 0;">Best signal: 8,5 dB (2024-11-27 20:11)</div>
<!-- black overlay -->
<div class="a" style="left:470px;top:76px;width:730px;height:60px;background:linear-gradient(rgba(0,0,0,0.64) 8px,rgba(0,0,0,0.58) 11px,rgba(0,0,0,0.43) 21px,rgba(0,0,0,0.36) 27px,rgba(0,0,0,0.26) 39px,rgba(0,0,0,0.17) 50px,rgba(0,0,0,0.12) 60px);-webkit-mask-image:linear-gradient(to right,transparent 0px,rgba(0,0,0,0.5) 18px,#000 34px);mask-image:linear-gradient(to right,transparent 0px,rgba(0,0,0,0.5) 18px,#000 34px)"></div>
<div class="a" style="left:1047px;top:136px;width:153px;height:30px;background:linear-gradient(rgba(0,0,0,0.12),rgba(0,0,0,0))"></div>
<div class="a" style="left:470px;top:0px;width:22px;height:76px;background:linear-gradient(to right,rgba(0,0,0,0),rgba(0,0,0,0.08) 12px,rgba(0,0,0,0.28))"></div>
<div class="a" style="left:492px;top:-10px;width:720px;height:94px;background:#000;border-radius:0 0 0 7px"></div>
<div class="clk" style="left:493px;width:139px;background:#ff5500"></div>
<div class="clk" style="left:633px;width:139px;background:#f00000"></div>
<div class="clk" style="left:774px;width:139px;background:#00c800"></div>
<div class="clk" style="left:915px;width:139px;background:#1040d0"></div>
<div class="clk" style="left:1056px;width:139px;background:#10c0c0"></div>
<div class="dt" style="left:493px;width:139px"></div>
<div class="dt" style="left:633px;width:139px"></div>
<div class="dt" style="left:774px;width:139px"></div>
<div class="dt" style="left:915px;width:139px"></div>
<div class="dt" style="left:1056px;width:139px"></div>

<div style="position:absolute;left:493px;top:2px;width:139px;height:19px;overflow:hidden"><div style="position:absolute;left:1.40px;top:0.85px;font-family:'Liberation Sans';font-size:14.53px;font-weight:bold;font-style:italic;color:#000;white-space:nowrap;line-height:normal;transform:scaleX(0.7935);transform-origin:0 0;-webkit-text-stroke:0.5px #000;">Berlin-Paris-Vienna-Roma</div></div>
<div style="position:absolute;left:687.30px;top:2.85px;font-family:'Liberation Sans';font-size:14.53px;font-weight:bold;font-style:italic;color:#000;white-space:nowrap;line-height:normal;transform:scaleX(0.8404);transform-origin:0 0;-webkit-text-stroke:0.5px #000;">Dubai</div>
<div style="position:absolute;left:820.00px;top:2.85px;font-family:'Liberation Sans';font-size:14.53px;font-weight:bold;font-style:italic;color:#000;white-space:nowrap;line-height:normal;transform:scaleX(0.8377);transform-origin:0 0;-webkit-text-stroke:0.5px #000;">Moscow</div>
<div style="position:absolute;left:948.80px;top:2.85px;font-family:'Liberation Sans';font-size:14.53px;font-weight:bold;font-style:italic;color:#000;white-space:nowrap;line-height:normal;transform:scaleX(0.8388);transform-origin:0 0;-webkit-text-stroke:0.5px #000;">London, Eng</div>
<div style="position:absolute;left:1074.30px;top:2.85px;font-family:'Liberation Sans';font-size:14.53px;font-weight:bold;font-style:italic;color:#000;white-space:nowrap;line-height:normal;transform:scaleX(0.8396);transform-origin:0 0;-webkit-text-stroke:0.5px #000;">Rabat-Casablanca</div>
<div style="position:absolute;left:493.80px;top:28.15px;font-family:'Liberation Sans';font-size:14.53px;font-weight:bold;font-style:normal;color:#000;white-space:nowrap;line-height:normal;transform:scaleX(0.7549);transform-origin:0 0;-webkit-text-stroke:0.5px #000;">Wed, Nov 27</div>
<div style="position:absolute;left:584.30px;top:28.15px;font-family:'Liberation Sans';font-size:14.53px;font-weight:bold;font-style:normal;color:#000;white-space:nowrap;line-height:normal;transform:scaleX(0.7186);transform-origin:0 0;-webkit-text-stroke:0.5px #000;">20:12:12</div>
<div style="position:absolute;left:633.80px;top:28.15px;font-family:'Liberation Sans';font-size:14.53px;font-weight:bold;font-style:normal;color:#000;white-space:nowrap;line-height:normal;transform:scaleX(0.7549);transform-origin:0 0;-webkit-text-stroke:0.5px #000;">Wed, Nov 27</div>
<div style="position:absolute;left:731.80px;top:28.15px;font-family:'Liberation Sans';font-size:14.53px;font-weight:bold;font-style:normal;color:#000;white-space:nowrap;line-height:normal;transform:scaleX(0.7260);transform-origin:0 0;-webkit-text-stroke:0.5px #000;">23:12</div>
<div style="position:absolute;left:774.80px;top:28.15px;font-family:'Liberation Sans';font-size:14.53px;font-weight:bold;font-style:normal;color:#000;white-space:nowrap;line-height:normal;transform:scaleX(0.7549);transform-origin:0 0;-webkit-text-stroke:0.5px #000;">Wed, Nov 27</div>
<div style="position:absolute;left:873.10px;top:28.15px;font-family:'Liberation Sans';font-size:14.53px;font-weight:bold;font-style:normal;color:#000;white-space:nowrap;line-height:normal;transform:scaleX(0.7260);transform-origin:0 0;-webkit-text-stroke:0.5px #000;">22:12</div>
<div style="position:absolute;left:915.80px;top:28.15px;font-family:'Liberation Sans';font-size:14.53px;font-weight:bold;font-style:normal;color:#000;white-space:nowrap;line-height:normal;transform:scaleX(0.7549);transform-origin:0 0;-webkit-text-stroke:0.5px #000;">Wed, Nov 27</div>
<div style="position:absolute;left:1006.20px;top:28.15px;font-family:'Liberation Sans';font-size:14.53px;font-weight:bold;font-style:normal;color:#000;white-space:nowrap;line-height:normal;transform:scaleX(0.7186);transform-origin:0 0;-webkit-text-stroke:0.5px #000;">19:12:12</div>
<div style="position:absolute;left:1056.80px;top:28.15px;font-family:'Liberation Sans';font-size:14.53px;font-weight:bold;font-style:normal;color:#000;white-space:nowrap;line-height:normal;transform:scaleX(0.7549);transform-origin:0 0;-webkit-text-stroke:0.5px #000;">Wed, Nov 27</div>
<div style="position:absolute;left:1154.80px;top:28.15px;font-family:'Liberation Sans';font-size:14.53px;font-weight:bold;font-style:normal;color:#000;white-space:nowrap;line-height:normal;transform:scaleX(0.7260);transform-origin:0 0;-webkit-text-stroke:0.5px #000;">20:12</div>
<div style="position:absolute;left:709.00px;top:24.70px;font-family:'Liberation Sans';font-size:10.17px;font-weight:bold;font-style:normal;color:#000;white-space:nowrap;line-height:normal;transform:scaleX(0.7543);transform-origin:0 0;-webkit-text-stroke:0.5px #000;">+3</div>
<div style="position:absolute;left:851.00px;top:24.60px;font-family:'Liberation Sans';font-size:10.17px;font-weight:bold;font-style:normal;color:#000;white-space:nowrap;line-height:normal;transform:scaleX(0.6705);transform-origin:0 0;-webkit-text-stroke:0.5px #000;">+2</div>
<div style="position:absolute;left:993.10px;top:24.50px;font-family:'Liberation Sans';font-size:10.17px;font-weight:bold;font-style:normal;color:#000;white-space:nowrap;line-height:normal;transform:scaleX(0.6715);transform-origin:0 0;-webkit-text-stroke:0.5px #000;">-1</div>
<div style="position:absolute;left:498.80px;top:52.61px;font-family:'Liberation Mono';font-size:16.69px;font-weight:normal;font-style:normal;color:#cccccc;white-space:nowrap;line-height:normal;transform:scaleX(0.7205);transform-origin:0 0;">C:\Users\Roman Dávid&gt;Signal monitoring_PF 450_LC/SK_Amos 3-4°W_f0=10 890 MHz-V yes_24.11.2024+</div>
<!-- logo -->
<div class="a" style="left:573px;top:80px;width:54px;height:52px;background:#fff"></div>
<svg class="a" style="left:573px;top:80px" width="54" height="52" viewBox="0 0 54 52">
 <path d="M9.5 43 A24 24 0 0 1 42 9.5" stroke="#1c2c9c" stroke-width="1.5" fill="none"/>
 <path d="M44.5 11.5 A24 24 0 0 1 50.8 28.5" stroke="#1c2c9c" stroke-width="1.8" fill="none"/>
 <path d="M50.8 31 A24 24 0 0 1 44.5 43" stroke="#1c2c9c" stroke-width="1.5" fill="none"/>
 <path d="M9.5 43 L44.5 43" stroke="#1c2c9c" stroke-width="1.3"/>
 <ellipse cx="25" cy="23.5" rx="2.2" ry="17.5" transform="rotate(-21 25 23.5)" stroke="#3a48a8" stroke-width="0.9" fill="none"/>
 <path d="M20 30 L36 23.5" stroke="#5a68c0" stroke-width="0.8" fill="none"/>
 <path d="M33 22 L37.5 23 L34.5 26" stroke="#2a38a8" stroke-width="1" fill="none"/>
 <circle cx="16.5" cy="33" r="2.3" stroke="#3a48a8" stroke-width="0.9" fill="none"/>
 <path d="M16 35.5 L11 43 M17.5 35.5 L23 43 M20 27 L17 31" stroke="#3a48a8" stroke-width="0.9" fill="none"/>
 <path d="M39.5 16.5 Q42.5 21 42 28" stroke="#d01818" stroke-width="1.7" fill="none"/>
 <path d="M42.5 13.5 Q46.5 19.5 46 28" stroke="#d01818" stroke-width="1.7" fill="none"/>
 <text x="2" y="50.3" font-family="Liberation Sans" font-weight="bold" font-size="6.8" fill="#1c2c9c" textLength="50.6" lengthAdjust="spacingAndGlyphs"><tspan fill="#c81818">DX</tspan>SATCS.COM</text>
</svg>
</body></html>
